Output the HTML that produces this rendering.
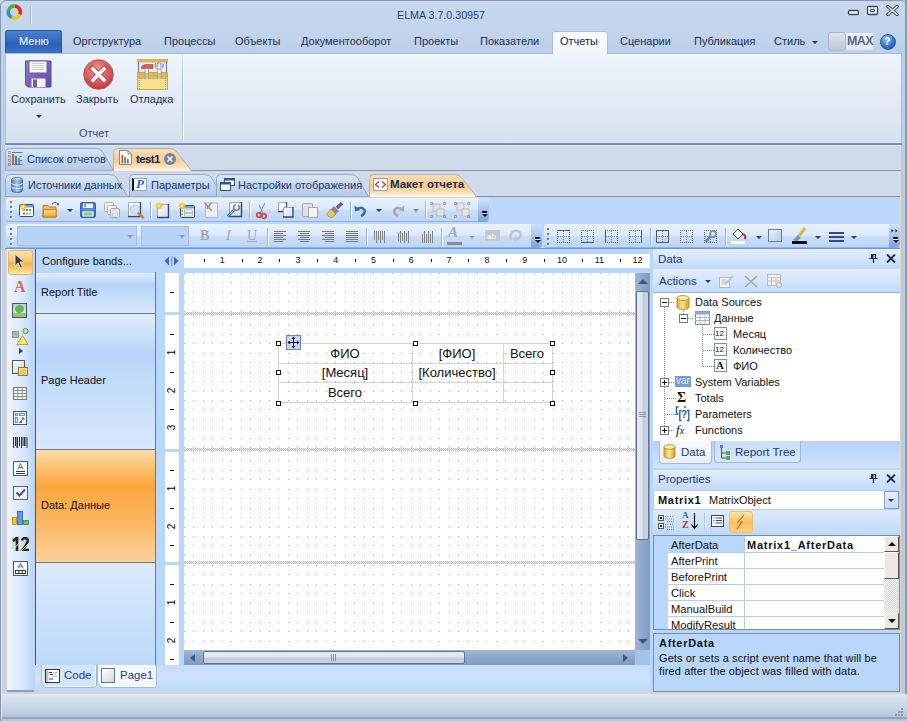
<!DOCTYPE html>
<html><head><meta charset="utf-8">
<style>
*{margin:0;padding:0;box-sizing:border-box}
html,body{width:907px;height:721px;overflow:hidden}
body{position:relative;background:#c3d4e9;font-family:"Liberation Sans",sans-serif;font-size:11px;color:#15428b}
.a{position:absolute}
.t{position:absolute;white-space:nowrap;line-height:13px}
svg{display:block}
</style></head><body>
<div class="a" style="left:0;top:0;width:907px;height:721px;background:linear-gradient(#c8d9ee,#c2d5ec 30px,#bcd0e8 53px,#c5d3e5 700px)"></div>
<div class="a" style="left:0;top:0;width:907px;height:721px;border:1px solid #8399b6;border-radius:6px 6px 0 0"></div>
<svg class="a" style="left:5px;top:3px" width="19" height="19" viewBox="0 0 19 19"><path d="M9.82 3.02 A6 6 0 0 1 14.74 11.54" stroke="#e8281c" stroke-width="3.6" fill="none"/><path d="M14.74 11.54 A6 6 0 0 1 6.76 14.44" stroke="#f6c400" stroke-width="3.6" fill="none"/><path d="M6.76 14.44 A6 6 0 0 1 3.66 6.95" stroke="#2f8ee0" stroke-width="3.6" fill="none"/><path d="M3.66 6.95 A6 6 0 0 1 9.82 3.02" stroke="#4cb038" stroke-width="3.6" fill="none"/></svg>
<div class="a" style="left:30px;top:7px;width:1px;height:17px;background:#9fb3cf;box-shadow:1px 0 0 #eaf1fa"></div>
<div class="t" style="left:397px;top:9px;font-size:10.7px;color:#2c3b78">ELMA 3.7.0.30957</div>
<svg class="a" style="left:847px;top:9px" width="13" height="7"><rect x="1.5" y="1.5" width="10" height="4" rx="1.2" fill="#f4f7fb" stroke="#3a4660" stroke-width="1.3"/></svg>
<svg class="a" style="left:866px;top:5px" width="13" height="11"><rect x="1.5" y="1.5" width="10" height="8" rx="1.2" fill="#f4f7fb" stroke="#3a4660" stroke-width="1.3"/><rect x="4.5" y="4.3" width="4" height="2.4" rx="0.6" fill="#c8d4e4" stroke="#3a4660" stroke-width="1"/></svg>
<svg class="a" style="left:886px;top:5px" width="13" height="11"><path d="M2 1.5L11 9.5M11 1.5L2 9.5" stroke="#3a4660" stroke-width="3.4" stroke-linecap="round"/><path d="M2 1.5L11 9.5M11 1.5L2 9.5" stroke="#f4f7fb" stroke-width="1.6" stroke-linecap="round"/></svg>
<div class="a" style="left:5px;top:30px;width:57px;height:24px;border-radius:3px 3px 0 0;background:linear-gradient(#4a7fd0,#3268c0 45%,#2d5fb8 55%,#3e76cc);border:1px solid #2b55a3;border-bottom:none"></div>
<div class="t" style="left:19px;top:35px;font-size:11px;color:#fff">Меню</div>
<div class="a" style="left:552px;top:31px;width:56px;height:24px;border-radius:3px 3px 0 0;background:linear-gradient(#ffffff,#f1f6fc);border:1px solid #a9bfd8;border-bottom:none"></div>
<div class="t" style="left:560px;top:35px;font-size:11px;color:#15283f">Отчеты</div>
<div class="t" style="left:73px;top:35px;font-size:11px;color:#1f2f55">Оргструктура</div>
<div class="t" style="left:164px;top:35px;font-size:11px;color:#1f2f55">Процессы</div>
<div class="t" style="left:235px;top:35px;font-size:11px;color:#1f2f55">Объекты</div>
<div class="t" style="left:301px;top:35px;font-size:11px;color:#1f2f55">Документооборот</div>
<div class="t" style="left:414px;top:35px;font-size:11px;color:#1f2f55">Проекты</div>
<div class="t" style="left:480px;top:35px;font-size:11px;color:#1f2f55">Показатели</div>
<div class="t" style="left:620px;top:35px;font-size:11px;color:#1f2f55">Сценарии</div>
<div class="t" style="left:694px;top:35px;font-size:11px;color:#1f2f55">Публикация</div>
<div class="t" style="left:774px;top:35px;font-size:11px;color:#1f2f55">Стиль</div>
<div class="a" style="left:812px;top:41px;width:0;height:0;border-left:3px solid transparent;border-right:3px solid transparent;border-top:3px solid #1c2d50"></div>
<div class="a" style="left:828px;top:32px;width:46px;height:19px;border:1px solid #c1cfe0;border-radius:3px;background:linear-gradient(#eef3fa,#e1e9f4)"></div>
<div class="a" style="left:828px;top:32px;width:18px;height:19px;border:1px solid #a9b6c6;border-radius:3px;background:linear-gradient(#dde5ee,#bcc8d6)"></div>
<div class="t" style="left:847px;top:35px;font-size:12.5px;font-weight:bold;color:#5a6884;letter-spacing:-0.6px">MAX</div>
<div class="a" style="left:880px;top:34px;width:16px;height:16px;border-radius:50%;background:radial-gradient(circle at 40% 30%,#8cc0f4,#2f6fcf 60%,#1d4ea8);border:1px solid #2a5aa8"></div>
<div class="t" style="left:884px;top:35px;font-size:11px;font-weight:bold;color:#fff">?</div>
<div class="a" style="left:5px;top:53px;width:897px;height:92px;background:linear-gradient(#edf4fc,#e2ebf6 50%,#d5e1ef);border:1px solid #a7bed9;border-bottom:none;border-radius:0 0 2px 2px"></div>
<div class="a" style="left:5px;top:143px;width:897px;height:2px;background:linear-gradient(#8199ba,#6a84a8)"></div>
<div class="a" style="left:553px;top:53px;width:54px;height:1px;background:#f1f6fc"></div>
<div class="a" style="left:182px;top:55px;width:1px;height:86px;background:linear-gradient(#d0dcec,#a9bdd8 25%,#a9bdd8 75%,#c8d6e8)"></div>
<div class="a" style="left:183px;top:55px;width:1px;height:86px;background:#f7fafe"></div>
<svg class="a" style="left:25px;top:60px" width="27" height="28" viewBox="0 0 27 28">
<defs><linearGradient id="pg" x1="0" y1="0" x2="1" y2="1"><stop offset="0" stop-color="#8e7ec8"/><stop offset="1" stop-color="#5e4aa4"/></linearGradient></defs>
<path d="M0.5 1 H26 V27 H3 L0.5 24.5 Z" fill="url(#pg)" stroke="#5a479e" stroke-width="1"/>
<rect x="4" y="1" width="18" height="12" fill="#fbfbfd" stroke="#6a58ac" stroke-width="1"/>
<path d="M6.5 3.5h13M6.5 5.5h13M6.5 7.5h13M6.5 9.5h13" stroke="#c4c4cc" stroke-width="0.9"/>
<rect x="6.5" y="18.5" width="14" height="8.5" fill="#f4f4f6"/>
<rect x="8" y="19.5" width="4" height="7.5" fill="#6d5bb0"/>
</svg>
<svg class="a" style="left:83px;top:59px" width="31" height="31" viewBox="0 0 31 31">
<defs><radialGradient id="rg" cx="0.45" cy="0.35" r="0.65"><stop offset="0" stop-color="#f49a9a"/><stop offset="0.7" stop-color="#d65454"/><stop offset="1" stop-color="#c03a3a"/></radialGradient></defs>
<circle cx="15.5" cy="15.5" r="14.8" fill="url(#rg)" stroke="#b84a4a" stroke-width="0.8"/>
<path d="M9.5 9.5 L21.5 21.5 M21.5 9.5 L9.5 21.5" stroke="#c64848" stroke-width="6" stroke-linecap="square"/>
<path d="M10 10 L21 21 M21 10 L10 21" stroke="#f2f7fd" stroke-width="3.8" stroke-linecap="square"/>
</svg>
<svg class="a" style="left:137px;top:59px" width="31" height="31" viewBox="0 0 31 31">
<rect x="0.5" y="0.5" width="30" height="2.5" fill="#e8b850" stroke="#c89a3a" stroke-width="0.6"/>
<path d="M1.5 3 V14 M29.5 3 V14" stroke="#6f7f95" stroke-width="1.2"/>
<rect x="0.5" y="13.5" width="30" height="17" fill="#f2d788" stroke="#d2a443" stroke-width="1"/>
<path d="M4 9 Q5 5.5 9 5.5 H16 V9.5 H4z" fill="#e05a50" stroke="#b83a30" stroke-width="0.6"/>
<rect x="8" y="9.5" width="3.5" height="11" fill="#eef1f5" stroke="#7d8ca0" stroke-width="0.7"/>
<path d="M18.5 4.5 A4.2 4.2 0 1 0 26 4.5 V7.5 H24 V4 H20.5 V7.5 H18.5z" fill="#eef1f5" stroke="#7d8ca0" stroke-width="0.8"/>
<rect x="20.3" y="10" width="3.8" height="10.5" fill="#eef1f5" stroke="#7d8ca0" stroke-width="0.7"/>
<rect x="1" y="14" width="29" height="6" fill="#c99a3a" opacity="0.55"/>
<rect x="1" y="20" width="29" height="10" fill="#f7df90"/>
<path d="M2.5 15 V30 M28.5 15 V30" stroke="#c89a3c" stroke-width="0.8" stroke-dasharray="1 1"/>
</svg>
<div class="t" style="left:11px;top:93px;font-size:11px;color:#1f2f55">Сохранить</div>
<div class="a" style="left:36px;top:115px;width:0;height:0;border-left:3px solid transparent;border-right:3px solid transparent;border-top:3px solid #1c2d50"></div>
<div class="t" style="left:76px;top:93px;font-size:11px;color:#1f2f55">Закрыть</div>
<div class="t" style="left:130px;top:93px;font-size:11px;color:#1f2f55">Отладка</div>
<div class="t" style="left:79px;top:127px;font-size:11px;color:#3b4d78">Отчет</div>
<div class="a" style="left:5px;top:145px;width:897px;height:53px;background:#cfdbeb"></div>
<div class="a" style="left:5px;top:145px;width:897px;height:1px;background:#dfe7f2"></div>
<div class="a" style="left:5px;top:170px;width:897px;height:1px;background:#7f98bd"></div>
<div class="a" style="left:5px;top:171px;width:897px;height:1px;background:#dcd6ca"></div>
<div class="a" style="left:5px;top:196px;width:897px;height:1px;background:#7490b8"></div>
<div class="a" style="left:5px;top:197px;width:897px;height:1px;background:#dcd6ca"></div>
<svg class="a" style="left:5px;top:148px" width="109" height="23" viewBox="0 0 109 23">
<defs><linearGradient id="g1" x1="0" y1="0" x2="0" y2="1"><stop offset="0" stop-color="#dbe8f8"/><stop offset="0.5" stop-color="#c3d7f2"/><stop offset="1" stop-color="#b2caea"/></linearGradient></defs>
<path d="M0.5 22.5 V4.5 Q0.5 0.5 4.5 0.5 H90 Q95 0.5 97 3 L108.5 22.5" fill="url(#g1)" stroke="#8ea7c9" stroke-width="1"/>
</svg>
<svg class="a" style="left:113px;top:148px" width="79" height="23" viewBox="0 0 79 23">
<defs><linearGradient id="g2" x1="0" y1="0" x2="0" y2="1"><stop offset="0" stop-color="#fbe1b6"/><stop offset="0.55" stop-color="#f9ca8c"/><stop offset="1" stop-color="#fdf1df"/></linearGradient></defs>
<path d="M0.5 22.5 V4.5 Q0.5 0.5 4.5 0.5 H56 Q61 0.5 63 3 L78.5 22.5" fill="url(#g2)" stroke="#a4b4c8" stroke-width="1"/>
</svg>
<div class="a" style="left:114px;top:169px;width:76px;height:2px;background:#fdf3e4"></div>
<svg class="a" style="left:8px;top:151px" width="16" height="16" viewBox="0 0 16 16">
<g fill="#f4f6fa" stroke="#8a96a6" stroke-width="0.8"><rect x="0.5" y="0.5" width="2" height="2"/><rect x="0.5" y="4.5" width="2" height="2"/><rect x="0.5" y="8.5" width="2" height="2"/><rect x="0.5" y="12.5" width="2" height="2"/></g>
<path d="M4 1.5H14.5M4 13.5H14.5M11.5 5.5H14M11.5 9.5H14" stroke="#6a7688" stroke-width="1"/>
<rect x="4" y="3" width="2" height="10" fill="#e05a40"/><rect x="7" y="5" width="2" height="8" fill="#3a9a3a"/><rect x="10" y="7" width="2" height="6" fill="#4a90e8"/>
</svg>
<div class="t" style="left:27px;top:153px;color:#22375e">Список отчетов</div>
<svg class="a" style="left:119px;top:150px" width="13" height="15" viewBox="0 0 13 15">
<path d="M0.5 0.5H9l3.5 3.5V14.5H0.5Z" fill="#fff" stroke="#7f8da0"/><path d="M9 0.5V4h3.5" fill="none" stroke="#7f8da0"/>
<rect x="2.5" y="5" width="1.8" height="8.5" fill="#d64a3a"/><rect x="5.2" y="7" width="1.8" height="6.5" fill="#3aa83a"/><rect x="7.9" y="9" width="1.8" height="4.5" fill="#3a7ad6"/>
</svg>
<div class="t" style="left:136px;top:153px;font-weight:bold;font-size:11.5px;color:#142a58;letter-spacing:-0.6px">test1</div>
<div class="a" style="left:164px;top:153px;width:12px;height:12px;border-radius:50%;background:#72849e"></div>
<svg class="a" style="left:164px;top:153px" width="12" height="12"><path d="M3.5 3.5L8.5 8.5M8.5 3.5L3.5 8.5" stroke="#fff" stroke-width="1.6"/></svg>
<svg class="a" style="left:5px;top:174px" width="123" height="23" viewBox="0 0 123 23">
<defs><linearGradient id="g3" x1="0" y1="0" x2="0" y2="1"><stop offset="0" stop-color="#dbe8f8"/><stop offset="0.5" stop-color="#c3d7f2"/><stop offset="1" stop-color="#b2caea"/></linearGradient></defs>
<path d="M0.5 22.5 V4.5 Q0.5 0.5 4.5 0.5 H104 Q109 0.5 111 3 L122.5 22.5" fill="url(#g3)" stroke="#8ea7c9" stroke-width="1"/>
</svg>
<svg class="a" style="left:129px;top:174px" width="94" height="23" viewBox="0 0 94 23">
<defs><linearGradient id="g4" x1="0" y1="0" x2="0" y2="1"><stop offset="0" stop-color="#dbe8f8"/><stop offset="0.5" stop-color="#c3d7f2"/><stop offset="1" stop-color="#b2caea"/></linearGradient></defs>
<path d="M0.5 22.5 V4.5 Q0.5 0.5 4.5 0.5 H75 Q80 0.5 82 3 L93.5 22.5" fill="url(#g4)" stroke="#8ea7c9" stroke-width="1"/>
</svg>
<svg class="a" style="left:216px;top:174px" width="153" height="23" viewBox="0 0 153 23">
<defs><linearGradient id="g5" x1="0" y1="0" x2="0" y2="1"><stop offset="0" stop-color="#dbe8f8"/><stop offset="0.5" stop-color="#c3d7f2"/><stop offset="1" stop-color="#b2caea"/></linearGradient></defs>
<path d="M0.5 22.5 V4.5 Q0.5 0.5 4.5 0.5 H134 Q139 0.5 141 3 L152.5 22.5" fill="url(#g5)" stroke="#8ea7c9" stroke-width="1"/>
</svg>
<svg class="a" style="left:369px;top:174px" width="108" height="23" viewBox="0 0 108 23">
<defs><linearGradient id="g6" x1="0" y1="0" x2="0" y2="1"><stop offset="0" stop-color="#fbe1b6"/><stop offset="0.55" stop-color="#f9ca8c"/><stop offset="1" stop-color="#fdf1df"/></linearGradient></defs>
<path d="M0.5 22.5 V4.5 Q0.5 0.5 4.5 0.5 H85 Q90 0.5 92 3 L107.5 22.5" fill="url(#g6)" stroke="#a4b4c8" stroke-width="1"/>
</svg>
<div class="a" style="left:370px;top:195px;width:105px;height:2px;background:#fdf3e4"></div>
<svg class="a" style="left:11px;top:177px" width="12" height="16" viewBox="0 0 12 16">
<defs><linearGradient id="db" x1="0" y1="0" x2="1" y2="0"><stop offset="0" stop-color="#4a78b8"/><stop offset="0.5" stop-color="#a9c8ee"/><stop offset="1" stop-color="#4a78b8"/></linearGradient></defs>
<ellipse cx="6" cy="2.5" rx="5.5" ry="2" fill="#cfe0f6" stroke="#3f6aa8" stroke-width="0.8"/>
<path d="M0.5 2.5V13.5A5.5 2 0 0 0 11.5 13.5V2.5" fill="url(#db)" stroke="#3f6aa8" stroke-width="0.8"/>
<path d="M0.5 6A5.5 2 0 0 0 11.5 6M0.5 9.7A5.5 2 0 0 0 11.5 9.7" fill="none" stroke="#f2f7fd" stroke-width="0.9"/>
</svg>
<div class="t" style="left:28px;top:179px;color:#22375e">Источники данных</div>
<div class="a" style="left:132px;top:178px;width:15px;height:13px;background:#fff;border:1px solid #93a3ba;border-left:2px solid #111"></div>
<div class="t" style="left:136px;top:177px;font-family:'Liberation Serif',serif;font-style:italic;font-weight:bold;font-size:13px;color:#2b63c4">P</div>
<div class="t" style="left:151px;top:179px;color:#22375e">Параметры</div>
<svg class="a" style="left:220px;top:178px" width="15" height="13" viewBox="0 0 15 13">
<rect x="4.5" y="0.5" width="10" height="7" fill="#fff" stroke="#2f4e7e"/><rect x="4.5" y="0.5" width="10" height="2" fill="#2f5a9a"/>
<rect x="0.5" y="4.5" width="10" height="8" fill="#fff" stroke="#2f4e7e"/><rect x="0.5" y="4.5" width="10" height="2" fill="#2f5a9a"/>
</svg>
<div class="t" style="left:238px;top:179px;color:#22375e">Настройки отображения</div>
<div class="a" style="left:373px;top:178px;width:15px;height:13px;background:#fff;border:1px solid #93a3ba"></div>
<svg class="a" style="left:373px;top:178px" width="15" height="13"><path d="M6 3.5L2.5 6.5 6 9.5M9 3.5L12.5 6.5 9 9.5" stroke="#c4343a" stroke-width="1.2" fill="none"/></svg>
<div class="t" style="left:390px;top:178px;font-weight:bold;font-size:11.5px;color:#1b2c55;letter-spacing:0px">Макет отчета</div>
<div class="a" style="left:5px;top:198px;width:897px;height:51px;background:#bcd7fa"></div>
<div class="a" style="left:5px;top:248px;width:897px;height:1px;background:#6f96cf"></div>
<div class="a" style="left:6px;top:198px;width:483px;height:24px;border-radius:3px;background:linear-gradient(#e9f2fd,#dce9fb 45%,#c7dcf8 55%,#bcd5f6);box-shadow:inset 0 -1px 0 #8fb2e3"></div><div class="a" style="left:478px;top:198px;width:11px;height:24px;border-radius:0 3px 5px 0;background:linear-gradient(#cfe2fb,#a9c8f0 45%,#7aa4dc);"></div><div class="a" style="left:482px;top:211px;width:5px;height:2px;background:#111;box-shadow:0 1px 0 #e8f2ff"></div><div class="a" style="left:481.5px;top:214px;width:0;height:0;border-left:3px solid transparent;border-right:3px solid transparent;border-top:3px solid #111"></div>
<div class="a" style="left:6px;top:224px;width:536px;height:24px;border-radius:3px;background:linear-gradient(#e9f2fd,#dce9fb 45%,#c7dcf8 55%,#bcd5f6);box-shadow:inset 0 -1px 0 #8fb2e3"></div><div class="a" style="left:531px;top:224px;width:11px;height:24px;border-radius:0 3px 5px 0;background:linear-gradient(#cfe2fb,#a9c8f0 45%,#7aa4dc);"></div><div class="a" style="left:535px;top:237px;width:5px;height:2px;background:#111;box-shadow:0 1px 0 #e8f2ff"></div><div class="a" style="left:534.5px;top:240px;width:0;height:0;border-left:3px solid transparent;border-right:3px solid transparent;border-top:3px solid #111"></div>
<div class="a" style="left:544px;top:224px;width:356px;height:24px;border-radius:3px;background:linear-gradient(#e9f2fd,#dce9fb 45%,#c7dcf8 55%,#bcd5f6);box-shadow:inset 0 -1px 0 #8fb2e3"></div><div class="a" style="left:889px;top:224px;width:11px;height:24px;border-radius:0 3px 5px 0;background:linear-gradient(#cfe2fb,#a9c8f0 45%,#7aa4dc);"></div><div class="a" style="left:893px;top:237px;width:5px;height:2px;background:#111;box-shadow:0 1px 0 #e8f2ff"></div><div class="a" style="left:892.5px;top:240px;width:0;height:0;border-left:3px solid transparent;border-right:3px solid transparent;border-top:3px solid #111"></div>
<svg class="a" style="left:891px;top:229px" width="8" height="4"><path d="M0.5 0V3.5L2.5 1.75zM4.5 0V3.5L6.5 1.75z" fill="#111"/></svg>
<div class="a" style="left:10px;top:201px;width:2px;height:2px;background:#4a7cc8;box-shadow:1px 1px 0 #fff"></div><div class="a" style="left:10px;top:206px;width:2px;height:2px;background:#4a7cc8;box-shadow:1px 1px 0 #fff"></div><div class="a" style="left:10px;top:211px;width:2px;height:2px;background:#4a7cc8;box-shadow:1px 1px 0 #fff"></div><div class="a" style="left:10px;top:216px;width:2px;height:2px;background:#4a7cc8;box-shadow:1px 1px 0 #fff"></div>
<div class="a" style="left:10px;top:228px;width:2px;height:2px;background:#4a7cc8;box-shadow:1px 1px 0 #fff"></div><div class="a" style="left:10px;top:233px;width:2px;height:2px;background:#4a7cc8;box-shadow:1px 1px 0 #fff"></div><div class="a" style="left:10px;top:238px;width:2px;height:2px;background:#4a7cc8;box-shadow:1px 1px 0 #fff"></div><div class="a" style="left:10px;top:243px;width:2px;height:2px;background:#4a7cc8;box-shadow:1px 1px 0 #fff"></div>
<div class="a" style="left:547px;top:228px;width:2px;height:2px;background:#4a7cc8;box-shadow:1px 1px 0 #fff"></div><div class="a" style="left:547px;top:233px;width:2px;height:2px;background:#4a7cc8;box-shadow:1px 1px 0 #fff"></div><div class="a" style="left:547px;top:238px;width:2px;height:2px;background:#4a7cc8;box-shadow:1px 1px 0 #fff"></div><div class="a" style="left:547px;top:243px;width:2px;height:2px;background:#4a7cc8;box-shadow:1px 1px 0 #fff"></div>
<svg class="a" style="left:19px;top:203px" width="15" height="14" viewBox="0 0 15 14">
<rect x="0.5" y="1.5" width="14" height="12" rx="1" fill="#fff" stroke="#2f4a78"/><rect x="1" y="2" width="13" height="2.5" fill="#7aa2dc"/>
<rect x="4" y="6" width="2" height="2" fill="#5ab050"/><rect x="7" y="6" width="2" height="2" fill="#3a8ee0"/><rect x="10" y="6" width="2" height="2" fill="#5ab050"/>
<rect x="4" y="9.5" width="2" height="2" fill="#3a8ee0"/><rect x="7" y="9.5" width="2" height="2" fill="#f08a50"/><rect x="10" y="9.5" width="2" height="2" fill="#f0c040"/>
<g stroke="#f2c80a" stroke-width="1.3"><path d="M0.5 4h7M4 0.5v7M1.5 1.5l5 5M6.5 1.5l-5 5"/></g><circle cx="4" cy="4" r="1.3" fill="#fff8d0"/>
</svg>
<svg class="a" style="left:42px;top:201px" width="18" height="17" viewBox="0 0 18 17">
<defs><linearGradient id="fo" x1="0" y1="0" x2="0" y2="1"><stop offset="0" stop-color="#fbe08a"/><stop offset="1" stop-color="#e8a820"/></linearGradient></defs>
<path d="M1 4.5h5l1.5 1.5h6.5v10h-13z" fill="#f0c060" stroke="#c8741a"/>
<path d="M1 16l0.8-7.5h12.5L14 16z" fill="url(#fo)" stroke="#c8741a" stroke-width="0.9"/>
<path d="M10 3Q13 0 16 3" fill="none" stroke="#4a6a9a" stroke-width="1.1"/><path d="M14.5 4.3L17 4.5 16.5 1.8z" fill="#4a6a9a"/>
</svg>
<div class="a" style="left:67px;top:209px;width:0;height:0;border-left:3px solid transparent;border-right:3px solid transparent;border-top:3px solid #1c3f84"></div>
<svg class="a" style="left:80px;top:202px" width="16" height="16" viewBox="0 0 16 16">
<rect x="0.8" y="0.8" width="14.4" height="14.4" rx="1.5" fill="#5a8ad6" stroke="#2f62b8" stroke-width="1.5"/>
<rect x="3" y="1.5" width="10" height="4.5" fill="#eef3fa"/><rect x="4.5" y="2" width="1.3" height="3" fill="#3a6ab8"/>
<rect x="2.5" y="9.5" width="11" height="5" fill="#fff"/><rect x="3.5" y="10.5" width="9" height="1.2" fill="#6cb84a"/><rect x="3.5" y="12.3" width="9" height="1.2" fill="#6cb84a"/>
</svg>
<svg class="a" style="left:104px;top:202px" width="16" height="16" viewBox="0 0 16 16">
<rect x="0.5" y="0.5" width="9" height="9" rx="1" fill="#f4f4f4" stroke="#b0b0b0"/><rect x="3.5" y="3.5" width="9" height="9" rx="1" fill="#f4f4f4" stroke="#b0b0b0"/>
<rect x="6.5" y="6.5" width="9" height="9" rx="1" fill="#e8e8e8" stroke="#a8a8a8"/><rect x="8.5" y="12" width="5" height="2" fill="#fff" stroke="#aaa" stroke-width="0.6"/>
</svg>
<svg class="a" style="left:128px;top:202px" width="17" height="17" viewBox="0 0 17 17">
<rect x="0" y="0" width="13" height="15" fill="#fff"/><path d="M0.5 15 V0.5 H13" stroke="#9aa8bc" fill="none"/><path d="M12.5 0 V14.5 H0" stroke="#2f4a78" stroke-width="1.4" fill="none"/>
<circle cx="7" cy="7.5" r="4.6" fill="#d6e6f6" stroke="#a8c4e4" stroke-width="1.2"/>
<path d="M10.5 11.5l4.5 4" stroke="#c88440" stroke-width="2.6" stroke-linecap="round"/>
</svg>
<div class="a" style="left:150px;top:201px;width:1px;height:18px;background:#9ab7df;box-shadow:1px 0 0 #fff"></div>
<svg class="a" style="left:155px;top:202px" width="15" height="17" viewBox="0 0 15 17">
<defs><linearGradient id="np" x1="0" y1="0" x2="1" y2="1"><stop offset="0" stop-color="#fff"/><stop offset="1" stop-color="#d4dae8"/></linearGradient></defs>
<rect x="2" y="2" width="12" height="14" fill="url(#np)"/><path d="M2.5 16 V2.5 H14" stroke="#9aa8bc" fill="none"/><path d="M13.5 2 V15.5 H2" stroke="#2f4a78" stroke-width="1.4" fill="none"/>
<g stroke="#f2c80a" stroke-width="1.3"><path d="M0.5 4h7M4 0.5v7M1.5 1.5l5 5M6.5 1.5l-5 5"/></g><circle cx="4" cy="4" r="1.3" fill="#fff8d0"/>
</svg>
<svg class="a" style="left:178px;top:202px" width="17" height="16" viewBox="0 0 17 16">
<rect x="2.5" y="3.5" width="14" height="12" rx="1" fill="#f8f8f6" stroke="#2f4a78"/><rect x="3" y="4" width="13" height="2.5" fill="#7aa2dc"/>
<rect x="3.5" y="8.5" width="1.5" height="1" fill="#3a68c0"/><rect x="6.5" y="8" width="8" height="2.5" fill="#fff" stroke="#9aa" stroke-width="0.7"/>
<rect x="3.5" y="12" width="1.5" height="1" fill="#3a68c0"/><rect x="6.5" y="11.5" width="8" height="2.5" fill="#fff" stroke="#9aa" stroke-width="0.7"/>
<g stroke="#f2c80a" stroke-width="1.3"><path d="M0.5 4h7M4 0.5v7M1.5 1.5l5 5M6.5 1.5l-5 5"/></g><circle cx="4" cy="4" r="1.3" fill="#fff8d0"/>
</svg>
<svg class="a" style="left:204px;top:202px" width="14" height="16" viewBox="0 0 14 16">
<rect x="1.5" y="1" width="12" height="14.5" fill="#eeeeee"/><path d="M1.5 15.5V1H13.5V15.5H1.5" stroke="#b8b8b8" fill="none"/>
<path d="M0.5 0.5L8 9M7.5 0.5L3 7" stroke="#9a9a9a" stroke-width="1.4"/>
</svg>
<svg class="a" style="left:227px;top:202px" width="16" height="16" viewBox="0 0 16 16">
<defs><linearGradient id="ps" x1="0" y1="0" x2="1" y2="1"><stop offset="0" stop-color="#fff"/><stop offset="1" stop-color="#ccd4e4"/></linearGradient></defs>
<rect x="2" y="0" width="13" height="15" fill="url(#ps)"/><path d="M2.5 15 V0.5 H15" stroke="#9aa8bc" fill="none"/><path d="M14.5 0 V14.5 H2" stroke="#2f4a78" stroke-width="1.4" fill="none"/>
<path d="M1.5 13.5L7 8" stroke="#4a7ed0" stroke-width="2.8" stroke-linecap="round"/><path d="M1.5 13.5L7 8" stroke="#a8c8f0" stroke-width="1"/>
<circle cx="9.5" cy="5.5" r="2.8" fill="none" stroke="#8a8a8a" stroke-width="1.6"/><rect x="9" y="2" width="2" height="2.5" fill="#fff"/>
</svg>
<div class="a" style="left:249px;top:201px;width:1px;height:18px;background:#9ab7df;box-shadow:1px 0 0 #fff"></div>
<svg class="a" style="left:256px;top:202px" width="12" height="17" viewBox="0 0 12 17">
<path d="M4 11L9 1M7 11L3 3" stroke="#8aa0be" stroke-width="1.2"/>
<circle cx="3" cy="13" r="2.3" fill="none" stroke="#d83a3a" stroke-width="1.6"/><circle cx="8" cy="14" r="2.3" fill="none" stroke="#d83a3a" stroke-width="1.6"/>
</svg>
<svg class="a" style="left:278px;top:202px" width="16" height="16" viewBox="0 0 16 16">
<rect x="0" y="0" width="9" height="10" fill="#fff"/><path d="M0.5 10V0.5H9" stroke="#9aa8bc" fill="none"/><path d="M8.5 0V9.5H0" stroke="#2f4a78" stroke-width="1.3" fill="none"/>
<defs><linearGradient id="cp" x1="0" y1="0" x2="1" y2="1"><stop offset="0" stop-color="#fff"/><stop offset="1" stop-color="#d0d8e6"/></linearGradient></defs>
<rect x="5" y="5" width="10.5" height="10.5" fill="url(#cp)"/><path d="M5.5 15.5V5.5H15" stroke="#9aa8bc" fill="none"/><path d="M15 5V15H5" stroke="#2f4a78" stroke-width="1.4" fill="none"/>
</svg>
<svg class="a" style="left:302px;top:202px" width="16" height="16" viewBox="0 0 16 16">
<rect x="0.5" y="1.5" width="10" height="13" rx="1" fill="#e2e2e2" stroke="#a8a8a8"/><rect x="6.5" y="5.5" width="9" height="10" fill="#f5f5f5" stroke="#a8a8a8"/>
</svg>
<svg class="a" style="left:326px;top:202px" width="17" height="16" viewBox="0 0 17 16">
<path d="M11 6L16 1" stroke="#6a52a8" stroke-width="3.2"/><path d="M8 4l5 5-3 3-5-5z" fill="#8a8a9a"/>
<path d="M5 7l5 5-4 3.5C4 15 1 14 0.5 12.5L2 11z" fill="#e8c860" stroke="#a88a30" stroke-width="0.8"/>
</svg>
<div class="a" style="left:350px;top:201px;width:1px;height:18px;background:#9ab7df;box-shadow:1px 0 0 #fff"></div>
<svg class="a" style="left:354px;top:204px" width="13" height="13" viewBox="0 0 13 13">
<path d="M3 5Q8 2 10.5 6Q11.5 10 7 12" fill="none" stroke="#2f6ad0" stroke-width="2.4"/>
<path d="M0.5 1.5L1 7.5 6.5 6z" fill="#2f6ad0"/>
</svg>
<div class="a" style="left:376px;top:209px;width:0;height:0;border-left:3px solid transparent;border-right:3px solid transparent;border-top:3px solid #1c3f84"></div>
<svg class="a" style="left:392px;top:204px" width="13" height="13" viewBox="0 0 13 13">
<path d="M10 5Q5 2 2.5 6Q1.5 10 6 12" fill="none" stroke="#a8a8a8" stroke-width="2.4"/>
<path d="M12.5 1.5L12 7.5 6.5 6z" fill="#a8a8a8"/>
</svg>
<div class="a" style="left:413px;top:209px;width:0;height:0;border-left:3px solid transparent;border-right:3px solid transparent;border-top:3px solid #8a8a8a"></div>
<div class="a" style="left:425px;top:201px;width:1px;height:18px;background:#9ab7df;box-shadow:1px 0 0 #fff"></div>
<svg class="a" style="left:430px;top:202px" width="17" height="16" viewBox="0 0 17 16">
<rect x="3" y="2" width="7" height="7" fill="#e6e6e6" stroke="#b0b0b0" stroke-width="0.8"/><rect x="7" y="7" width="7" height="7" fill="#e6e6e6" stroke="#b0b0b0" stroke-width="0.8"/>
<circle cx="1.5" cy="1.5" r="1.2" fill="none" stroke="#888"/><circle cx="14.5" cy="1.5" r="1.2" fill="none" stroke="#888"/><circle cx="1.5" cy="14.5" r="1.2" fill="none" stroke="#888"/><circle cx="14.5" cy="14.5" r="1.2" fill="none" stroke="#888"/>
</svg>
<svg class="a" style="left:454px;top:202px" width="17" height="16" viewBox="0 0 17 16">
<rect x="3" y="1" width="7" height="7" fill="#e6e6e6" stroke="#b0b0b0" stroke-width="0.8"/><rect x="8" y="7" width="7" height="7" fill="#e6e6e6" stroke="#b0b0b0" stroke-width="0.8"/>
<circle cx="1.5" cy="1.5" r="1.2" fill="none" stroke="#888"/><circle cx="14.5" cy="1.5" r="1.2" fill="none" stroke="#888"/><circle cx="1.5" cy="14.5" r="1.2" fill="none" stroke="#888"/><circle cx="14.5" cy="14.5" r="1.2" fill="none" stroke="#888"/>
</svg>
<div class="a" style="left:17px;top:226px;width:120px;height:20px;background:#b7d3f8;border:1px solid #a4bde0"></div>
<div class="a" style="left:127px;top:235px;width:0;height:0;border-left:3px solid transparent;border-right:3px solid transparent;border-top:3px solid #8a95a8"></div>
<div class="a" style="left:141px;top:226px;width:48px;height:20px;background:#b7d3f8;border:1px solid #a4bde0"></div>
<div class="a" style="left:179px;top:235px;width:0;height:0;border-left:3px solid transparent;border-right:3px solid transparent;border-top:3px solid #8a95a8"></div>
<div class="t" style="left:200px;top:229px;font-family:'Liberation Serif',serif;font-weight:bold;font-size:14px;color:#a4a8ae">B</div>
<div class="t" style="left:226px;top:229px;font-family:'Liberation Serif',serif;font-style:italic;font-size:14px;color:#a4a8ae">I</div>
<div class="t" style="left:247px;top:229px;font-family:'Liberation Serif',serif;font-size:14px;color:#a4a8ae;text-decoration:underline">U</div>
<div class="a" style="left:267px;top:228px;width:1px;height:18px;background:#9ab7df;box-shadow:1px 0 0 #fff"></div>
<div class="a" style="left:274px;top:231px;width:12px;height:1px;background:#777"></div><div class="a" style="left:274px;top:233px;width:9px;height:1px;background:#777"></div><div class="a" style="left:274px;top:235px;width:12px;height:1px;background:#777"></div><div class="a" style="left:274px;top:237px;width:9px;height:1px;background:#777"></div><div class="a" style="left:274px;top:239px;width:12px;height:1px;background:#777"></div><div class="a" style="left:274px;top:241px;width:9px;height:1px;background:#777"></div>
<div class="a" style="left:298px;top:231px;width:12px;height:1px;background:#777"></div><div class="a" style="left:300px;top:233px;width:9px;height:1px;background:#777"></div><div class="a" style="left:298px;top:235px;width:12px;height:1px;background:#777"></div><div class="a" style="left:300px;top:237px;width:9px;height:1px;background:#777"></div><div class="a" style="left:298px;top:239px;width:12px;height:1px;background:#777"></div><div class="a" style="left:300px;top:241px;width:9px;height:1px;background:#777"></div>
<div class="a" style="left:322px;top:231px;width:12px;height:1px;background:#777"></div><div class="a" style="left:325px;top:233px;width:9px;height:1px;background:#777"></div><div class="a" style="left:322px;top:235px;width:12px;height:1px;background:#777"></div><div class="a" style="left:325px;top:237px;width:9px;height:1px;background:#777"></div><div class="a" style="left:322px;top:239px;width:12px;height:1px;background:#777"></div><div class="a" style="left:325px;top:241px;width:9px;height:1px;background:#777"></div>
<div class="a" style="left:346px;top:231px;width:12px;height:1px;background:#777"></div><div class="a" style="left:346px;top:233px;width:12px;height:1px;background:#777"></div><div class="a" style="left:346px;top:235px;width:12px;height:1px;background:#777"></div><div class="a" style="left:346px;top:237px;width:12px;height:1px;background:#777"></div><div class="a" style="left:346px;top:239px;width:12px;height:1px;background:#777"></div><div class="a" style="left:346px;top:241px;width:12px;height:1px;background:#777"></div>
<div class="a" style="left:366px;top:228px;width:1px;height:18px;background:#9ab7df;box-shadow:1px 0 0 #fff"></div>
<div class="a" style="left:374px;top:231px;width:1px;height:9px;background:#858585"></div><div class="a" style="left:376px;top:231px;width:1px;height:12px;background:#858585"></div><div class="a" style="left:378px;top:231px;width:1px;height:9px;background:#858585"></div><div class="a" style="left:380px;top:231px;width:1px;height:12px;background:#858585"></div><div class="a" style="left:382px;top:231px;width:1px;height:9px;background:#858585"></div><div class="a" style="left:384px;top:231px;width:1px;height:12px;background:#858585"></div>
<div class="a" style="left:398px;top:233px;width:1px;height:8px;background:#858585"></div><div class="a" style="left:400px;top:231px;width:1px;height:12px;background:#858585"></div><div class="a" style="left:402px;top:233px;width:1px;height:8px;background:#858585"></div><div class="a" style="left:404px;top:231px;width:1px;height:12px;background:#858585"></div><div class="a" style="left:406px;top:233px;width:1px;height:8px;background:#858585"></div><div class="a" style="left:408px;top:231px;width:1px;height:12px;background:#858585"></div>
<div class="a" style="left:422px;top:234px;width:1px;height:9px;background:#858585"></div><div class="a" style="left:424px;top:231px;width:1px;height:12px;background:#858585"></div><div class="a" style="left:426px;top:234px;width:1px;height:9px;background:#858585"></div><div class="a" style="left:428px;top:231px;width:1px;height:12px;background:#858585"></div><div class="a" style="left:430px;top:234px;width:1px;height:9px;background:#858585"></div><div class="a" style="left:432px;top:231px;width:1px;height:12px;background:#858585"></div>
<div class="a" style="left:441px;top:228px;width:1px;height:18px;background:#9ab7df;box-shadow:1px 0 0 #fff"></div>
<div class="t" style="left:448px;top:226px;font-family:'Liberation Serif',serif;font-style:italic;font-weight:bold;font-size:15px;color:#a8acb2">A</div>
<div class="a" style="left:447px;top:242px;width:15px;height:3px;background:#8c8c8c"></div>
<div class="a" style="left:469px;top:236px;width:0;height:0;border-left:3px solid transparent;border-right:3px solid transparent;border-top:3px solid #9a9a9a"></div>
<div class="a" style="left:485px;top:230px;width:15px;height:11px;background:#c8c8c8;border-radius:1px"></div>
<div class="t" style="left:487px;top:230px;font-size:8px;color:#fff">ab</div>
<svg class="a" style="left:509px;top:229px" width="14" height="14" viewBox="0 0 14 14"><path d="M3 11Q0 7 3 3.5Q7 0 11 3.5Q13 7 9.5 9.5L6 9.5" fill="none" stroke="#c4c4c4" stroke-width="2.4"/><path d="M7 6L4 9.5 7 13z" fill="#c4c4c4"/></svg>
<div class="a" style="left:557px;top:230px;width:13px;height:13px;border:1px dotted #707070"></div><div class="a" style="left:563px;top:231px;width:0;height:11px;border-left:1px dotted #8a8a8a"></div><div class="a" style="left:558px;top:236px;width:11px;height:0;border-top:1px dotted #8a8a8a"></div><div class="a" style="left:557px;top:230px;width:13px;height:1px;background:#555d6a"></div>
<div class="a" style="left:581px;top:230px;width:13px;height:13px;border:1px dotted #707070"></div><div class="a" style="left:587px;top:231px;width:0;height:11px;border-left:1px dotted #8a8a8a"></div><div class="a" style="left:582px;top:236px;width:11px;height:0;border-top:1px dotted #8a8a8a"></div><div class="a" style="left:581px;top:242px;width:13px;height:1px;background:#555d6a"></div>
<div class="a" style="left:605px;top:230px;width:13px;height:13px;border:1px dotted #707070"></div><div class="a" style="left:611px;top:231px;width:0;height:11px;border-left:1px dotted #8a8a8a"></div><div class="a" style="left:606px;top:236px;width:11px;height:0;border-top:1px dotted #8a8a8a"></div><div class="a" style="left:605px;top:230px;width:1px;height:13px;background:#555d6a"></div>
<div class="a" style="left:629px;top:230px;width:13px;height:13px;border:1px dotted #707070"></div><div class="a" style="left:635px;top:231px;width:0;height:11px;border-left:1px dotted #8a8a8a"></div><div class="a" style="left:630px;top:236px;width:11px;height:0;border-top:1px dotted #8a8a8a"></div><div class="a" style="left:641px;top:230px;width:1px;height:13px;background:#555d6a"></div>
<div class="a" style="left:650px;top:228px;width:1px;height:18px;background:#9ab7df;box-shadow:1px 0 0 #fff"></div>
<div class="a" style="left:656px;top:230px;width:13px;height:13px;border:1px dotted #707070"></div><div class="a" style="left:662px;top:231px;width:0;height:11px;border-left:1px dotted #8a8a8a"></div><div class="a" style="left:657px;top:236px;width:11px;height:0;border-top:1px dotted #8a8a8a"></div><div class="a" style="left:656px;top:230px;width:13px;height:13px;border:1px solid #555d6a"></div>
<div class="a" style="left:680px;top:230px;width:13px;height:13px;border:1px dotted #707070"></div><div class="a" style="left:686px;top:231px;width:0;height:11px;border-left:1px dotted #8a8a8a"></div><div class="a" style="left:681px;top:236px;width:11px;height:0;border-top:1px dotted #8a8a8a"></div>
<div class="a" style="left:704px;top:230px;width:13px;height:13px;border:1px dotted #707070"></div><div class="a" style="left:710px;top:231px;width:0;height:11px;border-left:1px dotted #8a8a8a"></div><div class="a" style="left:705px;top:236px;width:11px;height:0;border-top:1px dotted #8a8a8a"></div><svg class="a" style="left:704px;top:229px" width="14" height="14"><path d="M1.5 12.5L7 7" stroke="#5a8ad8" stroke-width="2.6"/><circle cx="9" cy="5" r="3" fill="none" stroke="#8a94a4" stroke-width="1.8"/></svg>
<div class="a" style="left:725px;top:228px;width:1px;height:18px;background:#9ab7df;box-shadow:1px 0 0 #fff"></div>
<svg class="a" style="left:730px;top:227px" width="17" height="17" viewBox="0 0 17 17">
<path d="M3 7L8 2 13 7 8 12z" fill="#f4f6fa" stroke="#444" stroke-width="1"/><path d="M13 7Q16 8 15 12" stroke="#e03030" stroke-width="2.2" fill="none"/>
<rect x="1" y="14" width="14" height="3" fill="#fff"/>
</svg>
<div class="a" style="left:756px;top:236px;width:0;height:0;border-left:3px solid transparent;border-right:3px solid transparent;border-top:3px solid #1c3f84"></div>
<div class="a" style="left:768px;top:229px;width:14px;height:13px;border:1px solid #6a7a90;background:linear-gradient(135deg,#eef4fc,#b6cbe8)"></div>
<svg class="a" style="left:792px;top:227px" width="16" height="17" viewBox="0 0 16 17">
<path d="M13 1L7 9" stroke="#e0b840" stroke-width="3.2"/><path d="M6 8l3 3-4 3c-2 0-3-1-4-1z" fill="#7f90a8"/>
<rect x="0" y="14" width="15" height="3" fill="#111"/>
</svg>
<div class="a" style="left:815px;top:236px;width:0;height:0;border-left:3px solid transparent;border-right:3px solid transparent;border-top:3px solid #1c3f84"></div>
<div class="a" style="left:829px;top:232px;width:15px;height:2px;background:#2f4a80"></div>
<div class="a" style="left:829px;top:236px;width:15px;height:2px;background:#2f4a80"></div>
<div class="a" style="left:829px;top:240px;width:15px;height:2px;background:#2f4a80"></div>
<div class="a" style="left:851px;top:236px;width:0;height:0;border-left:3px solid transparent;border-right:3px solid transparent;border-top:3px solid #1c3f84"></div>
<div class="a" style="left:35px;top:249px;width:618px;height:443px;background:#b9d6fb"></div>
<div class="a" style="left:5px;top:249px;width:2px;height:443px;background:#d6d0c2"></div>
<div class="a" style="left:7px;top:249px;width:28px;height:442px;background:linear-gradient(90deg,#eef5fe,#d6e7fc 60%,#b9d4f6)"></div>
<div class="a" style="left:7px;top:690px;width:27px;height:2px;background:#7aa3d8"></div>
<div class="a" style="left:5px;top:692px;width:897px;height:2px;background:#ddd5c3"></div>
<div class="a" style="left:8px;top:250px;width:25px;height:25px;border:1px solid #d8b76c;border-radius:3px;background:linear-gradient(#fde4b0,#fbc26a 45%,#f9b24a 55%,#fde6a8)"></div>
<svg class="a" style="left:14px;top:253px" width="12" height="16" viewBox="0 0 12 16"><path d="M1 1V13L4 10 6.5 15 8.5 14 6 9H10z" fill="#3a3a3a" stroke="#fff" stroke-width="0.8"/></svg>
<div class="t" style="left:14px;top:279px;font-family:'Liberation Serif',serif;font-weight:bold;font-size:16px;color:#dc6464;line-height:16px">A</div>
<div class="a" style="left:12px;top:303px;width:15px;height:15px;border:1px solid #555;background:linear-gradient(#a8d4f0,#d0ecff)"></div>
<div class="a" style="left:15px;top:305px;width:9px;height:8px;border-radius:50%;background:#6ab84a"></div>
<div class="a" style="left:13px;top:313px;width:13px;height:4px;background:#8cc870"></div>
<svg class="a" style="left:11px;top:327px" width="19" height="19" viewBox="0 0 19 19">
<rect x="1.5" y="4.5" width="6" height="6" fill="#b4b4b4" stroke="#8a8a8a" stroke-width="0.8"/>
<circle cx="14.5" cy="4" r="2.6" fill="#b8e0a8" stroke="#58a048" stroke-width="1"/>
<path d="M11.5 8.5L17.2 17.5H5.8z" fill="#fbe07a" stroke="#d89a30" stroke-width="1"/>
</svg>
<div class="a" style="left:19px;top:348px;width:0;height:0;border-top:3px solid transparent;border-bottom:3px solid transparent;border-left:4px solid #1c3f84"></div>
<svg class="a" style="left:12px;top:360px" width="16" height="16" viewBox="0 0 16 16">
<defs><linearGradient id="sr" x1="0" y1="0" x2="1" y2="1"><stop offset="0" stop-color="#fff"/><stop offset="1" stop-color="#c8d0dc"/></linearGradient></defs>
<rect x="0.5" y="0.5" width="12" height="13" fill="url(#sr)" stroke="#555"/>
<rect x="6.5" y="7.5" width="9" height="8" fill="#fbe58a" stroke="#8a7a40"/><path d="M8 10h6M8 12h6M8 14h6" stroke="#c0a040" stroke-width="0.8"/>
</svg>
<svg class="a" style="left:13px;top:387px" width="14" height="13" viewBox="0 0 14 13">
<rect x="0.5" y="0.5" width="13" height="12" fill="#fff" stroke="#777"/>
<path d="M0.5 3.5h13M0.5 6.5h13M0.5 9.5h13M4.8 0.5v12M9.2 0.5v12" stroke="#8a8a8a"/>
</svg>
<svg class="a" style="left:13px;top:411px" width="14" height="14" viewBox="0 0 14 14">
<rect x="0.5" y="0.5" width="13" height="13" fill="#fff" stroke="#555"/>
<rect x="2.5" y="2.5" width="2" height="2" fill="#dfe8f5" stroke="#4a78c0" stroke-width="0.8"/><rect x="6.5" y="2.5" width="5" height="2" fill="#dfe8f5" stroke="#4a78c0" stroke-width="0.8"/>
<rect x="2.5" y="6.5" width="2" height="5" fill="#dfe8f5" stroke="#4a78c0" stroke-width="0.8"/><path d="M6.5 11.5L11 7M9 7h2v2M6.5 11.5h2v-2" stroke="#2a5ab0" stroke-width="1" fill="none"/>
</svg>
<svg class="a" style="left:13px;top:437px" width="15" height="11" viewBox="0 0 15 11"><rect x="0" y="0" width="1" height="9" fill="#333"/><rect x="2" y="0" width="1" height="9" fill="#333"/><rect x="3.5" y="0" width="1.5" height="9" fill="#333"/><rect x="6" y="0" width="1" height="9" fill="#333"/><rect x="8" y="0" width="1" height="9" fill="#333"/><rect x="9.5" y="0" width="1" height="9" fill="#333"/><rect x="11" y="0" width="1.5" height="9" fill="#333"/><rect x="13.5" y="0" width="1" height="9" fill="#333"/><rect x="0" y="9" width="1" height="2" fill="#333"/><rect x="3.5" y="9" width="1.5" height="2" fill="#333"/><rect x="8" y="9" width="1" height="2" fill="#333"/><rect x="13.5" y="9" width="1" height="2" fill="#333"/></svg>
<svg class="a" style="left:13px;top:461px" width="15" height="15" viewBox="0 0 15 15">
<rect x="0.5" y="0.5" width="14" height="14" fill="#fff" stroke="#555"/>
<path d="M4.8 8.5L7.5 2.5 10.2 8.5M5.8 6.5h3.4" stroke="#3a68c0" stroke-width="0.9" fill="none"/><path d="M3 10.5h9M3 12.5h9" stroke="#222" stroke-width="0.9"/>
</svg>
<svg class="a" style="left:13px;top:486px" width="15" height="14" viewBox="0 0 15 14">
<rect x="0.5" y="0.5" width="14" height="13" fill="#eef0f4" stroke="#666"/>
<path d="M3.5 6.5l3 3 5.5-6" stroke="#3a5a9a" stroke-width="2" fill="none"/>
</svg>
<svg class="a" style="left:12px;top:511px" width="17" height="14" viewBox="0 0 17 14">
<rect x="0.5" y="6.5" width="4" height="7" fill="#f4c020" stroke="#c08a10" stroke-width="0.8"/><rect x="5.5" y="0.5" width="5" height="13" fill="#5a9ae8" stroke="#2a5ab0" stroke-width="0.8"/><rect x="11.5" y="9.5" width="5" height="4" fill="#6ac060" stroke="#3a8a30" stroke-width="0.8"/>
</svg>
<svg class="a" style="left:12px;top:537px" width="17" height="14" viewBox="0 0 17 14">
<rect x="0" y="0" width="7.5" height="14" fill="#d8d8d8"/><rect x="9" y="0" width="8" height="14" fill="#d8d8d8"/>
<path d="M1 4L5 0.8V14" stroke="#222" stroke-width="2.6" fill="none"/><path d="M10 3.5Q10.5 1 13 1Q16 1.2 15.8 4Q15 7 10.5 13H17" stroke="#222" stroke-width="2.4" fill="none"/>
<path d="M0 14L7 6M9 14L17 6" stroke="#fff" stroke-width="0.8"/>
</svg>
<svg class="a" style="left:13px;top:561px" width="15" height="15" viewBox="0 0 15 15">
<rect x="0.5" y="0.5" width="14" height="14" fill="#fff" stroke="#555"/>
<path d="M4.8 7.5L7.5 2 10.2 7.5M5.8 5.7h3.4" stroke="#3a68c0" stroke-width="0.9" fill="none"/><rect x="2.5" y="9.5" width="10" height="3" fill="none" stroke="#333"/><path d="M5.8 9.5v3M9.2 9.5v3" stroke="#333"/>
</svg>
<div class="a" style="left:35px;top:249px;width:149px;height:416px;background:#b9d6fb"></div>
<div class="t" style="left:42px;top:255px;color:#111;font-size:11px">Configure bands...</div>
<svg class="a" style="left:164px;top:255px" width="16" height="12" viewBox="0 0 16 12">
<path d="M5 1.5V10.5L0.5 6z" fill="#3a6ac8"/><rect x="7" y="1" width="1.5" height="10" fill="#b0a080"/><path d="M10 1.5V10.5L14.5 6z" fill="#3a6ac8"/>
</svg>
<div class="a" style="left:35px;top:249px;width:1px;height:416px;background:#555"></div>
<div class="a" style="left:155px;top:272px;width:1px;height:393px;background:#777"></div>
<div class="a" style="left:36px;top:273px;width:119px;height:40px;background:linear-gradient(#e0edfd,#c8dffa 18%,#b7d5fa 30%,#c6defa 60%,#d9e8fb)"></div>
<div class="a" style="left:36px;top:313px;width:119px;height:1px;background:#777"></div>
<div class="t" style="left:41px;top:286px;color:#111">Report Title</div>
<div class="a" style="left:36px;top:314px;width:119px;height:135px;background:linear-gradient(#e0edfd,#c8dffa 18%,#b7d5fa 30%,#c6defa 60%,#d9e8fb)"></div>
<div class="a" style="left:36px;top:449px;width:119px;height:1px;background:#777"></div>
<div class="t" style="left:41px;top:374px;color:#111">Page Header</div>
<div class="a" style="left:36px;top:450px;width:119px;height:112px;background:linear-gradient(#fddcae,#fbb85c 22%,#fba63c 33%,#fbb55e 62%,#fdd19a)"></div>
<div class="a" style="left:36px;top:562px;width:119px;height:1px;background:#777"></div>
<div class="t" style="left:41px;top:499px;color:#111">Data: Данные</div>
<div class="a" style="left:36px;top:563px;width:119px;height:102px;background:linear-gradient(#dcebfc,#c9e0fb 60%,#bcd8fb)"></div>
<div class="a" style="left:36px;top:665px;width:119px;height:1px;background:#777"></div>
<div class="a" style="left:184px;top:254px;width:466px;height:14px;background:#fff"></div>
<div class="a" style="left:204px;top:259px;width:1px;height:3px;background:#111"></div>
<div class="t" style="left:219.8px;top:255px;font-size:9px;color:#111;line-height:11px">1</div>
<div class="a" style="left:242px;top:259px;width:1px;height:3px;background:#111"></div>
<div class="t" style="left:257.6px;top:255px;font-size:9px;color:#111;line-height:11px">2</div>
<div class="a" style="left:279px;top:259px;width:1px;height:3px;background:#111"></div>
<div class="t" style="left:295.4px;top:255px;font-size:9px;color:#111;line-height:11px">3</div>
<div class="a" style="left:317px;top:259px;width:1px;height:3px;background:#111"></div>
<div class="t" style="left:333.2px;top:255px;font-size:9px;color:#111;line-height:11px">4</div>
<div class="a" style="left:355px;top:259px;width:1px;height:3px;background:#111"></div>
<div class="t" style="left:371.0px;top:255px;font-size:9px;color:#111;line-height:11px">5</div>
<div class="a" style="left:393px;top:259px;width:1px;height:3px;background:#111"></div>
<div class="t" style="left:408.8px;top:255px;font-size:9px;color:#111;line-height:11px">6</div>
<div class="a" style="left:431px;top:259px;width:1px;height:3px;background:#111"></div>
<div class="t" style="left:446.6px;top:255px;font-size:9px;color:#111;line-height:11px">7</div>
<div class="a" style="left:468px;top:259px;width:1px;height:3px;background:#111"></div>
<div class="t" style="left:484.4px;top:255px;font-size:9px;color:#111;line-height:11px">8</div>
<div class="a" style="left:506px;top:259px;width:1px;height:3px;background:#111"></div>
<div class="t" style="left:522.2px;top:255px;font-size:9px;color:#111;line-height:11px">9</div>
<div class="a" style="left:544px;top:259px;width:1px;height:3px;background:#111"></div>
<div class="t" style="left:557.0px;top:255px;font-size:9px;color:#111;line-height:11px">10</div>
<div class="a" style="left:582px;top:259px;width:1px;height:3px;background:#111"></div>
<div class="t" style="left:594.7px;top:255px;font-size:9px;color:#111;line-height:11px">11</div>
<div class="a" style="left:620px;top:259px;width:1px;height:3px;background:#111"></div>
<div class="t" style="left:632.5px;top:255px;font-size:9px;color:#111;line-height:11px">12</div>
<div class="a" style="left:165px;top:273px;width:14px;height:39px;background:#fff"></div>
<div class="a" style="left:170px;top:292px;width:4px;height:1px;background:#111"></div>
<div class="a" style="left:165px;top:315px;width:14px;height:134px;background:#fff"></div>
<div class="a" style="left:170px;top:334px;width:4px;height:1px;background:#111"></div>
<div class="t" style="left:169px;top:347px;font-size:10px;color:#000;line-height:11px;transform:rotate(-90deg)">1</div>
<div class="a" style="left:170px;top:372px;width:4px;height:1px;background:#111"></div>
<div class="t" style="left:169px;top:385px;font-size:10px;color:#000;line-height:11px;transform:rotate(-90deg)">2</div>
<div class="a" style="left:170px;top:409px;width:4px;height:1px;background:#111"></div>
<div class="t" style="left:169px;top:422px;font-size:10px;color:#000;line-height:11px;transform:rotate(-90deg)">3</div>
<div class="a" style="left:165px;top:452px;width:14px;height:110px;background:#fff"></div>
<div class="a" style="left:170px;top:470px;width:4px;height:1px;background:#111"></div>
<div class="t" style="left:169px;top:483px;font-size:10px;color:#000;line-height:11px;transform:rotate(-90deg)">1</div>
<div class="a" style="left:170px;top:508px;width:4px;height:1px;background:#111"></div>
<div class="t" style="left:169px;top:521px;font-size:10px;color:#000;line-height:11px;transform:rotate(-90deg)">2</div>
<div class="a" style="left:170px;top:545px;width:4px;height:1px;background:#111"></div>
<div class="a" style="left:165px;top:565px;width:14px;height:100px;background:#fff"></div>
<div class="a" style="left:170px;top:584px;width:4px;height:1px;background:#111"></div>
<div class="t" style="left:169px;top:597px;font-size:10px;color:#000;line-height:11px;transform:rotate(-90deg)">1</div>
<div class="a" style="left:170px;top:622px;width:4px;height:1px;background:#111"></div>
<div class="t" style="left:169px;top:635px;font-size:10px;color:#000;line-height:11px;transform:rotate(-90deg)">2</div>
<div class="a" style="left:170px;top:659px;width:4px;height:1px;background:#111"></div>
<div class="a" style="left:184px;top:273px;width:451px;height:377px;background:#fff"></div>
<svg class="a" style="left:0;top:0" width="907" height="721"><path d="M184 273h1v1h-1zM193 273h1v1h-1zM203 273h1v1h-1zM212 273h1v1h-1zM222 273h1v1h-1zM231 273h1v1h-1zM241 273h1v1h-1zM250 273h1v1h-1zM260 273h1v1h-1zM269 273h1v1h-1zM278 273h1v1h-1zM288 273h1v1h-1zM297 273h1v1h-1zM307 273h1v1h-1zM316 273h1v1h-1zM326 273h1v1h-1zM335 273h1v1h-1zM345 273h1v1h-1zM354 273h1v1h-1zM364 273h1v1h-1zM373 273h1v1h-1zM382 273h1v1h-1zM392 273h1v1h-1zM401 273h1v1h-1zM411 273h1v1h-1zM420 273h1v1h-1zM430 273h1v1h-1zM439 273h1v1h-1zM449 273h1v1h-1zM458 273h1v1h-1zM467 273h1v1h-1zM477 273h1v1h-1zM486 273h1v1h-1zM496 273h1v1h-1zM505 273h1v1h-1zM515 273h1v1h-1zM524 273h1v1h-1zM534 273h1v1h-1zM543 273h1v1h-1zM553 273h1v1h-1zM562 273h1v1h-1zM571 273h1v1h-1zM581 273h1v1h-1zM590 273h1v1h-1zM600 273h1v1h-1zM609 273h1v1h-1zM619 273h1v1h-1zM628 273h1v1h-1zM184 282h1v1h-1zM193 282h1v1h-1zM203 282h1v1h-1zM212 282h1v1h-1zM222 282h1v1h-1zM231 282h1v1h-1zM241 282h1v1h-1zM250 282h1v1h-1zM260 282h1v1h-1zM269 282h1v1h-1zM278 282h1v1h-1zM288 282h1v1h-1zM297 282h1v1h-1zM307 282h1v1h-1zM316 282h1v1h-1zM326 282h1v1h-1zM335 282h1v1h-1zM345 282h1v1h-1zM354 282h1v1h-1zM364 282h1v1h-1zM373 282h1v1h-1zM382 282h1v1h-1zM392 282h1v1h-1zM401 282h1v1h-1zM411 282h1v1h-1zM420 282h1v1h-1zM430 282h1v1h-1zM439 282h1v1h-1zM449 282h1v1h-1zM458 282h1v1h-1zM467 282h1v1h-1zM477 282h1v1h-1zM486 282h1v1h-1zM496 282h1v1h-1zM505 282h1v1h-1zM515 282h1v1h-1zM524 282h1v1h-1zM534 282h1v1h-1zM543 282h1v1h-1zM553 282h1v1h-1zM562 282h1v1h-1zM571 282h1v1h-1zM581 282h1v1h-1zM590 282h1v1h-1zM600 282h1v1h-1zM609 282h1v1h-1zM619 282h1v1h-1zM628 282h1v1h-1zM184 292h1v1h-1zM193 292h1v1h-1zM203 292h1v1h-1zM212 292h1v1h-1zM222 292h1v1h-1zM231 292h1v1h-1zM241 292h1v1h-1zM250 292h1v1h-1zM260 292h1v1h-1zM269 292h1v1h-1zM278 292h1v1h-1zM288 292h1v1h-1zM297 292h1v1h-1zM307 292h1v1h-1zM316 292h1v1h-1zM326 292h1v1h-1zM335 292h1v1h-1zM345 292h1v1h-1zM354 292h1v1h-1zM364 292h1v1h-1zM373 292h1v1h-1zM382 292h1v1h-1zM392 292h1v1h-1zM401 292h1v1h-1zM411 292h1v1h-1zM420 292h1v1h-1zM430 292h1v1h-1zM439 292h1v1h-1zM449 292h1v1h-1zM458 292h1v1h-1zM467 292h1v1h-1zM477 292h1v1h-1zM486 292h1v1h-1zM496 292h1v1h-1zM505 292h1v1h-1zM515 292h1v1h-1zM524 292h1v1h-1zM534 292h1v1h-1zM543 292h1v1h-1zM553 292h1v1h-1zM562 292h1v1h-1zM571 292h1v1h-1zM581 292h1v1h-1zM590 292h1v1h-1zM600 292h1v1h-1zM609 292h1v1h-1zM619 292h1v1h-1zM628 292h1v1h-1zM184 301h1v1h-1zM193 301h1v1h-1zM203 301h1v1h-1zM212 301h1v1h-1zM222 301h1v1h-1zM231 301h1v1h-1zM241 301h1v1h-1zM250 301h1v1h-1zM260 301h1v1h-1zM269 301h1v1h-1zM278 301h1v1h-1zM288 301h1v1h-1zM297 301h1v1h-1zM307 301h1v1h-1zM316 301h1v1h-1zM326 301h1v1h-1zM335 301h1v1h-1zM345 301h1v1h-1zM354 301h1v1h-1zM364 301h1v1h-1zM373 301h1v1h-1zM382 301h1v1h-1zM392 301h1v1h-1zM401 301h1v1h-1zM411 301h1v1h-1zM420 301h1v1h-1zM430 301h1v1h-1zM439 301h1v1h-1zM449 301h1v1h-1zM458 301h1v1h-1zM467 301h1v1h-1zM477 301h1v1h-1zM486 301h1v1h-1zM496 301h1v1h-1zM505 301h1v1h-1zM515 301h1v1h-1zM524 301h1v1h-1zM534 301h1v1h-1zM543 301h1v1h-1zM553 301h1v1h-1zM562 301h1v1h-1zM571 301h1v1h-1zM581 301h1v1h-1zM590 301h1v1h-1zM600 301h1v1h-1zM609 301h1v1h-1zM619 301h1v1h-1zM628 301h1v1h-1zM184 311h1v1h-1zM193 311h1v1h-1zM203 311h1v1h-1zM212 311h1v1h-1zM222 311h1v1h-1zM231 311h1v1h-1zM241 311h1v1h-1zM250 311h1v1h-1zM260 311h1v1h-1zM269 311h1v1h-1zM278 311h1v1h-1zM288 311h1v1h-1zM297 311h1v1h-1zM307 311h1v1h-1zM316 311h1v1h-1zM326 311h1v1h-1zM335 311h1v1h-1zM345 311h1v1h-1zM354 311h1v1h-1zM364 311h1v1h-1zM373 311h1v1h-1zM382 311h1v1h-1zM392 311h1v1h-1zM401 311h1v1h-1zM411 311h1v1h-1zM420 311h1v1h-1zM430 311h1v1h-1zM439 311h1v1h-1zM449 311h1v1h-1zM458 311h1v1h-1zM467 311h1v1h-1zM477 311h1v1h-1zM486 311h1v1h-1zM496 311h1v1h-1zM505 311h1v1h-1zM515 311h1v1h-1zM524 311h1v1h-1zM534 311h1v1h-1zM543 311h1v1h-1zM553 311h1v1h-1zM562 311h1v1h-1zM571 311h1v1h-1zM581 311h1v1h-1zM590 311h1v1h-1zM600 311h1v1h-1zM609 311h1v1h-1zM619 311h1v1h-1zM628 311h1v1h-1zM184 315h1v1h-1zM193 315h1v1h-1zM203 315h1v1h-1zM212 315h1v1h-1zM222 315h1v1h-1zM231 315h1v1h-1zM241 315h1v1h-1zM250 315h1v1h-1zM260 315h1v1h-1zM269 315h1v1h-1zM278 315h1v1h-1zM288 315h1v1h-1zM297 315h1v1h-1zM307 315h1v1h-1zM316 315h1v1h-1zM326 315h1v1h-1zM335 315h1v1h-1zM345 315h1v1h-1zM354 315h1v1h-1zM364 315h1v1h-1zM373 315h1v1h-1zM382 315h1v1h-1zM392 315h1v1h-1zM401 315h1v1h-1zM411 315h1v1h-1zM420 315h1v1h-1zM430 315h1v1h-1zM439 315h1v1h-1zM449 315h1v1h-1zM458 315h1v1h-1zM467 315h1v1h-1zM477 315h1v1h-1zM486 315h1v1h-1zM496 315h1v1h-1zM505 315h1v1h-1zM515 315h1v1h-1zM524 315h1v1h-1zM534 315h1v1h-1zM543 315h1v1h-1zM553 315h1v1h-1zM562 315h1v1h-1zM571 315h1v1h-1zM581 315h1v1h-1zM590 315h1v1h-1zM600 315h1v1h-1zM609 315h1v1h-1zM619 315h1v1h-1zM628 315h1v1h-1zM184 324h1v1h-1zM193 324h1v1h-1zM203 324h1v1h-1zM212 324h1v1h-1zM222 324h1v1h-1zM231 324h1v1h-1zM241 324h1v1h-1zM250 324h1v1h-1zM260 324h1v1h-1zM269 324h1v1h-1zM278 324h1v1h-1zM288 324h1v1h-1zM297 324h1v1h-1zM307 324h1v1h-1zM316 324h1v1h-1zM326 324h1v1h-1zM335 324h1v1h-1zM345 324h1v1h-1zM354 324h1v1h-1zM364 324h1v1h-1zM373 324h1v1h-1zM382 324h1v1h-1zM392 324h1v1h-1zM401 324h1v1h-1zM411 324h1v1h-1zM420 324h1v1h-1zM430 324h1v1h-1zM439 324h1v1h-1zM449 324h1v1h-1zM458 324h1v1h-1zM467 324h1v1h-1zM477 324h1v1h-1zM486 324h1v1h-1zM496 324h1v1h-1zM505 324h1v1h-1zM515 324h1v1h-1zM524 324h1v1h-1zM534 324h1v1h-1zM543 324h1v1h-1zM553 324h1v1h-1zM562 324h1v1h-1zM571 324h1v1h-1zM581 324h1v1h-1zM590 324h1v1h-1zM600 324h1v1h-1zM609 324h1v1h-1zM619 324h1v1h-1zM628 324h1v1h-1zM184 334h1v1h-1zM193 334h1v1h-1zM203 334h1v1h-1zM212 334h1v1h-1zM222 334h1v1h-1zM231 334h1v1h-1zM241 334h1v1h-1zM250 334h1v1h-1zM260 334h1v1h-1zM269 334h1v1h-1zM278 334h1v1h-1zM288 334h1v1h-1zM297 334h1v1h-1zM307 334h1v1h-1zM316 334h1v1h-1zM326 334h1v1h-1zM335 334h1v1h-1zM345 334h1v1h-1zM354 334h1v1h-1zM364 334h1v1h-1zM373 334h1v1h-1zM382 334h1v1h-1zM392 334h1v1h-1zM401 334h1v1h-1zM411 334h1v1h-1zM420 334h1v1h-1zM430 334h1v1h-1zM439 334h1v1h-1zM449 334h1v1h-1zM458 334h1v1h-1zM467 334h1v1h-1zM477 334h1v1h-1zM486 334h1v1h-1zM496 334h1v1h-1zM505 334h1v1h-1zM515 334h1v1h-1zM524 334h1v1h-1zM534 334h1v1h-1zM543 334h1v1h-1zM553 334h1v1h-1zM562 334h1v1h-1zM571 334h1v1h-1zM581 334h1v1h-1zM590 334h1v1h-1zM600 334h1v1h-1zM609 334h1v1h-1zM619 334h1v1h-1zM628 334h1v1h-1zM184 343h1v1h-1zM193 343h1v1h-1zM203 343h1v1h-1zM212 343h1v1h-1zM222 343h1v1h-1zM231 343h1v1h-1zM241 343h1v1h-1zM250 343h1v1h-1zM260 343h1v1h-1zM269 343h1v1h-1zM278 343h1v1h-1zM288 343h1v1h-1zM297 343h1v1h-1zM307 343h1v1h-1zM316 343h1v1h-1zM326 343h1v1h-1zM335 343h1v1h-1zM345 343h1v1h-1zM354 343h1v1h-1zM364 343h1v1h-1zM373 343h1v1h-1zM382 343h1v1h-1zM392 343h1v1h-1zM401 343h1v1h-1zM411 343h1v1h-1zM420 343h1v1h-1zM430 343h1v1h-1zM439 343h1v1h-1zM449 343h1v1h-1zM458 343h1v1h-1zM467 343h1v1h-1zM477 343h1v1h-1zM486 343h1v1h-1zM496 343h1v1h-1zM505 343h1v1h-1zM515 343h1v1h-1zM524 343h1v1h-1zM534 343h1v1h-1zM543 343h1v1h-1zM553 343h1v1h-1zM562 343h1v1h-1zM571 343h1v1h-1zM581 343h1v1h-1zM590 343h1v1h-1zM600 343h1v1h-1zM609 343h1v1h-1zM619 343h1v1h-1zM628 343h1v1h-1zM184 353h1v1h-1zM193 353h1v1h-1zM203 353h1v1h-1zM212 353h1v1h-1zM222 353h1v1h-1zM231 353h1v1h-1zM241 353h1v1h-1zM250 353h1v1h-1zM260 353h1v1h-1zM269 353h1v1h-1zM278 353h1v1h-1zM288 353h1v1h-1zM297 353h1v1h-1zM307 353h1v1h-1zM316 353h1v1h-1zM326 353h1v1h-1zM335 353h1v1h-1zM345 353h1v1h-1zM354 353h1v1h-1zM364 353h1v1h-1zM373 353h1v1h-1zM382 353h1v1h-1zM392 353h1v1h-1zM401 353h1v1h-1zM411 353h1v1h-1zM420 353h1v1h-1zM430 353h1v1h-1zM439 353h1v1h-1zM449 353h1v1h-1zM458 353h1v1h-1zM467 353h1v1h-1zM477 353h1v1h-1zM486 353h1v1h-1zM496 353h1v1h-1zM505 353h1v1h-1zM515 353h1v1h-1zM524 353h1v1h-1zM534 353h1v1h-1zM543 353h1v1h-1zM553 353h1v1h-1zM562 353h1v1h-1zM571 353h1v1h-1zM581 353h1v1h-1zM590 353h1v1h-1zM600 353h1v1h-1zM609 353h1v1h-1zM619 353h1v1h-1zM628 353h1v1h-1zM184 362h1v1h-1zM193 362h1v1h-1zM203 362h1v1h-1zM212 362h1v1h-1zM222 362h1v1h-1zM231 362h1v1h-1zM241 362h1v1h-1zM250 362h1v1h-1zM260 362h1v1h-1zM269 362h1v1h-1zM278 362h1v1h-1zM288 362h1v1h-1zM297 362h1v1h-1zM307 362h1v1h-1zM316 362h1v1h-1zM326 362h1v1h-1zM335 362h1v1h-1zM345 362h1v1h-1zM354 362h1v1h-1zM364 362h1v1h-1zM373 362h1v1h-1zM382 362h1v1h-1zM392 362h1v1h-1zM401 362h1v1h-1zM411 362h1v1h-1zM420 362h1v1h-1zM430 362h1v1h-1zM439 362h1v1h-1zM449 362h1v1h-1zM458 362h1v1h-1zM467 362h1v1h-1zM477 362h1v1h-1zM486 362h1v1h-1zM496 362h1v1h-1zM505 362h1v1h-1zM515 362h1v1h-1zM524 362h1v1h-1zM534 362h1v1h-1zM543 362h1v1h-1zM553 362h1v1h-1zM562 362h1v1h-1zM571 362h1v1h-1zM581 362h1v1h-1zM590 362h1v1h-1zM600 362h1v1h-1zM609 362h1v1h-1zM619 362h1v1h-1zM628 362h1v1h-1zM184 372h1v1h-1zM193 372h1v1h-1zM203 372h1v1h-1zM212 372h1v1h-1zM222 372h1v1h-1zM231 372h1v1h-1zM241 372h1v1h-1zM250 372h1v1h-1zM260 372h1v1h-1zM269 372h1v1h-1zM278 372h1v1h-1zM288 372h1v1h-1zM297 372h1v1h-1zM307 372h1v1h-1zM316 372h1v1h-1zM326 372h1v1h-1zM335 372h1v1h-1zM345 372h1v1h-1zM354 372h1v1h-1zM364 372h1v1h-1zM373 372h1v1h-1zM382 372h1v1h-1zM392 372h1v1h-1zM401 372h1v1h-1zM411 372h1v1h-1zM420 372h1v1h-1zM430 372h1v1h-1zM439 372h1v1h-1zM449 372h1v1h-1zM458 372h1v1h-1zM467 372h1v1h-1zM477 372h1v1h-1zM486 372h1v1h-1zM496 372h1v1h-1zM505 372h1v1h-1zM515 372h1v1h-1zM524 372h1v1h-1zM534 372h1v1h-1zM543 372h1v1h-1zM553 372h1v1h-1zM562 372h1v1h-1zM571 372h1v1h-1zM581 372h1v1h-1zM590 372h1v1h-1zM600 372h1v1h-1zM609 372h1v1h-1zM619 372h1v1h-1zM628 372h1v1h-1zM184 381h1v1h-1zM193 381h1v1h-1zM203 381h1v1h-1zM212 381h1v1h-1zM222 381h1v1h-1zM231 381h1v1h-1zM241 381h1v1h-1zM250 381h1v1h-1zM260 381h1v1h-1zM269 381h1v1h-1zM278 381h1v1h-1zM288 381h1v1h-1zM297 381h1v1h-1zM307 381h1v1h-1zM316 381h1v1h-1zM326 381h1v1h-1zM335 381h1v1h-1zM345 381h1v1h-1zM354 381h1v1h-1zM364 381h1v1h-1zM373 381h1v1h-1zM382 381h1v1h-1zM392 381h1v1h-1zM401 381h1v1h-1zM411 381h1v1h-1zM420 381h1v1h-1zM430 381h1v1h-1zM439 381h1v1h-1zM449 381h1v1h-1zM458 381h1v1h-1zM467 381h1v1h-1zM477 381h1v1h-1zM486 381h1v1h-1zM496 381h1v1h-1zM505 381h1v1h-1zM515 381h1v1h-1zM524 381h1v1h-1zM534 381h1v1h-1zM543 381h1v1h-1zM553 381h1v1h-1zM562 381h1v1h-1zM571 381h1v1h-1zM581 381h1v1h-1zM590 381h1v1h-1zM600 381h1v1h-1zM609 381h1v1h-1zM619 381h1v1h-1zM628 381h1v1h-1zM184 391h1v1h-1zM193 391h1v1h-1zM203 391h1v1h-1zM212 391h1v1h-1zM222 391h1v1h-1zM231 391h1v1h-1zM241 391h1v1h-1zM250 391h1v1h-1zM260 391h1v1h-1zM269 391h1v1h-1zM278 391h1v1h-1zM288 391h1v1h-1zM297 391h1v1h-1zM307 391h1v1h-1zM316 391h1v1h-1zM326 391h1v1h-1zM335 391h1v1h-1zM345 391h1v1h-1zM354 391h1v1h-1zM364 391h1v1h-1zM373 391h1v1h-1zM382 391h1v1h-1zM392 391h1v1h-1zM401 391h1v1h-1zM411 391h1v1h-1zM420 391h1v1h-1zM430 391h1v1h-1zM439 391h1v1h-1zM449 391h1v1h-1zM458 391h1v1h-1zM467 391h1v1h-1zM477 391h1v1h-1zM486 391h1v1h-1zM496 391h1v1h-1zM505 391h1v1h-1zM515 391h1v1h-1zM524 391h1v1h-1zM534 391h1v1h-1zM543 391h1v1h-1zM553 391h1v1h-1zM562 391h1v1h-1zM571 391h1v1h-1zM581 391h1v1h-1zM590 391h1v1h-1zM600 391h1v1h-1zM609 391h1v1h-1zM619 391h1v1h-1zM628 391h1v1h-1zM184 400h1v1h-1zM193 400h1v1h-1zM203 400h1v1h-1zM212 400h1v1h-1zM222 400h1v1h-1zM231 400h1v1h-1zM241 400h1v1h-1zM250 400h1v1h-1zM260 400h1v1h-1zM269 400h1v1h-1zM278 400h1v1h-1zM288 400h1v1h-1zM297 400h1v1h-1zM307 400h1v1h-1zM316 400h1v1h-1zM326 400h1v1h-1zM335 400h1v1h-1zM345 400h1v1h-1zM354 400h1v1h-1zM364 400h1v1h-1zM373 400h1v1h-1zM382 400h1v1h-1zM392 400h1v1h-1zM401 400h1v1h-1zM411 400h1v1h-1zM420 400h1v1h-1zM430 400h1v1h-1zM439 400h1v1h-1zM449 400h1v1h-1zM458 400h1v1h-1zM467 400h1v1h-1zM477 400h1v1h-1zM486 400h1v1h-1zM496 400h1v1h-1zM505 400h1v1h-1zM515 400h1v1h-1zM524 400h1v1h-1zM534 400h1v1h-1zM543 400h1v1h-1zM553 400h1v1h-1zM562 400h1v1h-1zM571 400h1v1h-1zM581 400h1v1h-1zM590 400h1v1h-1zM600 400h1v1h-1zM609 400h1v1h-1zM619 400h1v1h-1zM628 400h1v1h-1zM184 409h1v1h-1zM193 409h1v1h-1zM203 409h1v1h-1zM212 409h1v1h-1zM222 409h1v1h-1zM231 409h1v1h-1zM241 409h1v1h-1zM250 409h1v1h-1zM260 409h1v1h-1zM269 409h1v1h-1zM278 409h1v1h-1zM288 409h1v1h-1zM297 409h1v1h-1zM307 409h1v1h-1zM316 409h1v1h-1zM326 409h1v1h-1zM335 409h1v1h-1zM345 409h1v1h-1zM354 409h1v1h-1zM364 409h1v1h-1zM373 409h1v1h-1zM382 409h1v1h-1zM392 409h1v1h-1zM401 409h1v1h-1zM411 409h1v1h-1zM420 409h1v1h-1zM430 409h1v1h-1zM439 409h1v1h-1zM449 409h1v1h-1zM458 409h1v1h-1zM467 409h1v1h-1zM477 409h1v1h-1zM486 409h1v1h-1zM496 409h1v1h-1zM505 409h1v1h-1zM515 409h1v1h-1zM524 409h1v1h-1zM534 409h1v1h-1zM543 409h1v1h-1zM553 409h1v1h-1zM562 409h1v1h-1zM571 409h1v1h-1zM581 409h1v1h-1zM590 409h1v1h-1zM600 409h1v1h-1zM609 409h1v1h-1zM619 409h1v1h-1zM628 409h1v1h-1zM184 419h1v1h-1zM193 419h1v1h-1zM203 419h1v1h-1zM212 419h1v1h-1zM222 419h1v1h-1zM231 419h1v1h-1zM241 419h1v1h-1zM250 419h1v1h-1zM260 419h1v1h-1zM269 419h1v1h-1zM278 419h1v1h-1zM288 419h1v1h-1zM297 419h1v1h-1zM307 419h1v1h-1zM316 419h1v1h-1zM326 419h1v1h-1zM335 419h1v1h-1zM345 419h1v1h-1zM354 419h1v1h-1zM364 419h1v1h-1zM373 419h1v1h-1zM382 419h1v1h-1zM392 419h1v1h-1zM401 419h1v1h-1zM411 419h1v1h-1zM420 419h1v1h-1zM430 419h1v1h-1zM439 419h1v1h-1zM449 419h1v1h-1zM458 419h1v1h-1zM467 419h1v1h-1zM477 419h1v1h-1zM486 419h1v1h-1zM496 419h1v1h-1zM505 419h1v1h-1zM515 419h1v1h-1zM524 419h1v1h-1zM534 419h1v1h-1zM543 419h1v1h-1zM553 419h1v1h-1zM562 419h1v1h-1zM571 419h1v1h-1zM581 419h1v1h-1zM590 419h1v1h-1zM600 419h1v1h-1zM609 419h1v1h-1zM619 419h1v1h-1zM628 419h1v1h-1zM184 428h1v1h-1zM193 428h1v1h-1zM203 428h1v1h-1zM212 428h1v1h-1zM222 428h1v1h-1zM231 428h1v1h-1zM241 428h1v1h-1zM250 428h1v1h-1zM260 428h1v1h-1zM269 428h1v1h-1zM278 428h1v1h-1zM288 428h1v1h-1zM297 428h1v1h-1zM307 428h1v1h-1zM316 428h1v1h-1zM326 428h1v1h-1zM335 428h1v1h-1zM345 428h1v1h-1zM354 428h1v1h-1zM364 428h1v1h-1zM373 428h1v1h-1zM382 428h1v1h-1zM392 428h1v1h-1zM401 428h1v1h-1zM411 428h1v1h-1zM420 428h1v1h-1zM430 428h1v1h-1zM439 428h1v1h-1zM449 428h1v1h-1zM458 428h1v1h-1zM467 428h1v1h-1zM477 428h1v1h-1zM486 428h1v1h-1zM496 428h1v1h-1zM505 428h1v1h-1zM515 428h1v1h-1zM524 428h1v1h-1zM534 428h1v1h-1zM543 428h1v1h-1zM553 428h1v1h-1zM562 428h1v1h-1zM571 428h1v1h-1zM581 428h1v1h-1zM590 428h1v1h-1zM600 428h1v1h-1zM609 428h1v1h-1zM619 428h1v1h-1zM628 428h1v1h-1zM184 438h1v1h-1zM193 438h1v1h-1zM203 438h1v1h-1zM212 438h1v1h-1zM222 438h1v1h-1zM231 438h1v1h-1zM241 438h1v1h-1zM250 438h1v1h-1zM260 438h1v1h-1zM269 438h1v1h-1zM278 438h1v1h-1zM288 438h1v1h-1zM297 438h1v1h-1zM307 438h1v1h-1zM316 438h1v1h-1zM326 438h1v1h-1zM335 438h1v1h-1zM345 438h1v1h-1zM354 438h1v1h-1zM364 438h1v1h-1zM373 438h1v1h-1zM382 438h1v1h-1zM392 438h1v1h-1zM401 438h1v1h-1zM411 438h1v1h-1zM420 438h1v1h-1zM430 438h1v1h-1zM439 438h1v1h-1zM449 438h1v1h-1zM458 438h1v1h-1zM467 438h1v1h-1zM477 438h1v1h-1zM486 438h1v1h-1zM496 438h1v1h-1zM505 438h1v1h-1zM515 438h1v1h-1zM524 438h1v1h-1zM534 438h1v1h-1zM543 438h1v1h-1zM553 438h1v1h-1zM562 438h1v1h-1zM571 438h1v1h-1zM581 438h1v1h-1zM590 438h1v1h-1zM600 438h1v1h-1zM609 438h1v1h-1zM619 438h1v1h-1zM628 438h1v1h-1zM184 447h1v1h-1zM193 447h1v1h-1zM203 447h1v1h-1zM212 447h1v1h-1zM222 447h1v1h-1zM231 447h1v1h-1zM241 447h1v1h-1zM250 447h1v1h-1zM260 447h1v1h-1zM269 447h1v1h-1zM278 447h1v1h-1zM288 447h1v1h-1zM297 447h1v1h-1zM307 447h1v1h-1zM316 447h1v1h-1zM326 447h1v1h-1zM335 447h1v1h-1zM345 447h1v1h-1zM354 447h1v1h-1zM364 447h1v1h-1zM373 447h1v1h-1zM382 447h1v1h-1zM392 447h1v1h-1zM401 447h1v1h-1zM411 447h1v1h-1zM420 447h1v1h-1zM430 447h1v1h-1zM439 447h1v1h-1zM449 447h1v1h-1zM458 447h1v1h-1zM467 447h1v1h-1zM477 447h1v1h-1zM486 447h1v1h-1zM496 447h1v1h-1zM505 447h1v1h-1zM515 447h1v1h-1zM524 447h1v1h-1zM534 447h1v1h-1zM543 447h1v1h-1zM553 447h1v1h-1zM562 447h1v1h-1zM571 447h1v1h-1zM581 447h1v1h-1zM590 447h1v1h-1zM600 447h1v1h-1zM609 447h1v1h-1zM619 447h1v1h-1zM628 447h1v1h-1zM184 451h1v1h-1zM193 451h1v1h-1zM203 451h1v1h-1zM212 451h1v1h-1zM222 451h1v1h-1zM231 451h1v1h-1zM241 451h1v1h-1zM250 451h1v1h-1zM260 451h1v1h-1zM269 451h1v1h-1zM278 451h1v1h-1zM288 451h1v1h-1zM297 451h1v1h-1zM307 451h1v1h-1zM316 451h1v1h-1zM326 451h1v1h-1zM335 451h1v1h-1zM345 451h1v1h-1zM354 451h1v1h-1zM364 451h1v1h-1zM373 451h1v1h-1zM382 451h1v1h-1zM392 451h1v1h-1zM401 451h1v1h-1zM411 451h1v1h-1zM420 451h1v1h-1zM430 451h1v1h-1zM439 451h1v1h-1zM449 451h1v1h-1zM458 451h1v1h-1zM467 451h1v1h-1zM477 451h1v1h-1zM486 451h1v1h-1zM496 451h1v1h-1zM505 451h1v1h-1zM515 451h1v1h-1zM524 451h1v1h-1zM534 451h1v1h-1zM543 451h1v1h-1zM553 451h1v1h-1zM562 451h1v1h-1zM571 451h1v1h-1zM581 451h1v1h-1zM590 451h1v1h-1zM600 451h1v1h-1zM609 451h1v1h-1zM619 451h1v1h-1zM628 451h1v1h-1zM184 460h1v1h-1zM193 460h1v1h-1zM203 460h1v1h-1zM212 460h1v1h-1zM222 460h1v1h-1zM231 460h1v1h-1zM241 460h1v1h-1zM250 460h1v1h-1zM260 460h1v1h-1zM269 460h1v1h-1zM278 460h1v1h-1zM288 460h1v1h-1zM297 460h1v1h-1zM307 460h1v1h-1zM316 460h1v1h-1zM326 460h1v1h-1zM335 460h1v1h-1zM345 460h1v1h-1zM354 460h1v1h-1zM364 460h1v1h-1zM373 460h1v1h-1zM382 460h1v1h-1zM392 460h1v1h-1zM401 460h1v1h-1zM411 460h1v1h-1zM420 460h1v1h-1zM430 460h1v1h-1zM439 460h1v1h-1zM449 460h1v1h-1zM458 460h1v1h-1zM467 460h1v1h-1zM477 460h1v1h-1zM486 460h1v1h-1zM496 460h1v1h-1zM505 460h1v1h-1zM515 460h1v1h-1zM524 460h1v1h-1zM534 460h1v1h-1zM543 460h1v1h-1zM553 460h1v1h-1zM562 460h1v1h-1zM571 460h1v1h-1zM581 460h1v1h-1zM590 460h1v1h-1zM600 460h1v1h-1zM609 460h1v1h-1zM619 460h1v1h-1zM628 460h1v1h-1zM184 470h1v1h-1zM193 470h1v1h-1zM203 470h1v1h-1zM212 470h1v1h-1zM222 470h1v1h-1zM231 470h1v1h-1zM241 470h1v1h-1zM250 470h1v1h-1zM260 470h1v1h-1zM269 470h1v1h-1zM278 470h1v1h-1zM288 470h1v1h-1zM297 470h1v1h-1zM307 470h1v1h-1zM316 470h1v1h-1zM326 470h1v1h-1zM335 470h1v1h-1zM345 470h1v1h-1zM354 470h1v1h-1zM364 470h1v1h-1zM373 470h1v1h-1zM382 470h1v1h-1zM392 470h1v1h-1zM401 470h1v1h-1zM411 470h1v1h-1zM420 470h1v1h-1zM430 470h1v1h-1zM439 470h1v1h-1zM449 470h1v1h-1zM458 470h1v1h-1zM467 470h1v1h-1zM477 470h1v1h-1zM486 470h1v1h-1zM496 470h1v1h-1zM505 470h1v1h-1zM515 470h1v1h-1zM524 470h1v1h-1zM534 470h1v1h-1zM543 470h1v1h-1zM553 470h1v1h-1zM562 470h1v1h-1zM571 470h1v1h-1zM581 470h1v1h-1zM590 470h1v1h-1zM600 470h1v1h-1zM609 470h1v1h-1zM619 470h1v1h-1zM628 470h1v1h-1zM184 479h1v1h-1zM193 479h1v1h-1zM203 479h1v1h-1zM212 479h1v1h-1zM222 479h1v1h-1zM231 479h1v1h-1zM241 479h1v1h-1zM250 479h1v1h-1zM260 479h1v1h-1zM269 479h1v1h-1zM278 479h1v1h-1zM288 479h1v1h-1zM297 479h1v1h-1zM307 479h1v1h-1zM316 479h1v1h-1zM326 479h1v1h-1zM335 479h1v1h-1zM345 479h1v1h-1zM354 479h1v1h-1zM364 479h1v1h-1zM373 479h1v1h-1zM382 479h1v1h-1zM392 479h1v1h-1zM401 479h1v1h-1zM411 479h1v1h-1zM420 479h1v1h-1zM430 479h1v1h-1zM439 479h1v1h-1zM449 479h1v1h-1zM458 479h1v1h-1zM467 479h1v1h-1zM477 479h1v1h-1zM486 479h1v1h-1zM496 479h1v1h-1zM505 479h1v1h-1zM515 479h1v1h-1zM524 479h1v1h-1zM534 479h1v1h-1zM543 479h1v1h-1zM553 479h1v1h-1zM562 479h1v1h-1zM571 479h1v1h-1zM581 479h1v1h-1zM590 479h1v1h-1zM600 479h1v1h-1zM609 479h1v1h-1zM619 479h1v1h-1zM628 479h1v1h-1zM184 489h1v1h-1zM193 489h1v1h-1zM203 489h1v1h-1zM212 489h1v1h-1zM222 489h1v1h-1zM231 489h1v1h-1zM241 489h1v1h-1zM250 489h1v1h-1zM260 489h1v1h-1zM269 489h1v1h-1zM278 489h1v1h-1zM288 489h1v1h-1zM297 489h1v1h-1zM307 489h1v1h-1zM316 489h1v1h-1zM326 489h1v1h-1zM335 489h1v1h-1zM345 489h1v1h-1zM354 489h1v1h-1zM364 489h1v1h-1zM373 489h1v1h-1zM382 489h1v1h-1zM392 489h1v1h-1zM401 489h1v1h-1zM411 489h1v1h-1zM420 489h1v1h-1zM430 489h1v1h-1zM439 489h1v1h-1zM449 489h1v1h-1zM458 489h1v1h-1zM467 489h1v1h-1zM477 489h1v1h-1zM486 489h1v1h-1zM496 489h1v1h-1zM505 489h1v1h-1zM515 489h1v1h-1zM524 489h1v1h-1zM534 489h1v1h-1zM543 489h1v1h-1zM553 489h1v1h-1zM562 489h1v1h-1zM571 489h1v1h-1zM581 489h1v1h-1zM590 489h1v1h-1zM600 489h1v1h-1zM609 489h1v1h-1zM619 489h1v1h-1zM628 489h1v1h-1zM184 498h1v1h-1zM193 498h1v1h-1zM203 498h1v1h-1zM212 498h1v1h-1zM222 498h1v1h-1zM231 498h1v1h-1zM241 498h1v1h-1zM250 498h1v1h-1zM260 498h1v1h-1zM269 498h1v1h-1zM278 498h1v1h-1zM288 498h1v1h-1zM297 498h1v1h-1zM307 498h1v1h-1zM316 498h1v1h-1zM326 498h1v1h-1zM335 498h1v1h-1zM345 498h1v1h-1zM354 498h1v1h-1zM364 498h1v1h-1zM373 498h1v1h-1zM382 498h1v1h-1zM392 498h1v1h-1zM401 498h1v1h-1zM411 498h1v1h-1zM420 498h1v1h-1zM430 498h1v1h-1zM439 498h1v1h-1zM449 498h1v1h-1zM458 498h1v1h-1zM467 498h1v1h-1zM477 498h1v1h-1zM486 498h1v1h-1zM496 498h1v1h-1zM505 498h1v1h-1zM515 498h1v1h-1zM524 498h1v1h-1zM534 498h1v1h-1zM543 498h1v1h-1zM553 498h1v1h-1zM562 498h1v1h-1zM571 498h1v1h-1zM581 498h1v1h-1zM590 498h1v1h-1zM600 498h1v1h-1zM609 498h1v1h-1zM619 498h1v1h-1zM628 498h1v1h-1zM184 508h1v1h-1zM193 508h1v1h-1zM203 508h1v1h-1zM212 508h1v1h-1zM222 508h1v1h-1zM231 508h1v1h-1zM241 508h1v1h-1zM250 508h1v1h-1zM260 508h1v1h-1zM269 508h1v1h-1zM278 508h1v1h-1zM288 508h1v1h-1zM297 508h1v1h-1zM307 508h1v1h-1zM316 508h1v1h-1zM326 508h1v1h-1zM335 508h1v1h-1zM345 508h1v1h-1zM354 508h1v1h-1zM364 508h1v1h-1zM373 508h1v1h-1zM382 508h1v1h-1zM392 508h1v1h-1zM401 508h1v1h-1zM411 508h1v1h-1zM420 508h1v1h-1zM430 508h1v1h-1zM439 508h1v1h-1zM449 508h1v1h-1zM458 508h1v1h-1zM467 508h1v1h-1zM477 508h1v1h-1zM486 508h1v1h-1zM496 508h1v1h-1zM505 508h1v1h-1zM515 508h1v1h-1zM524 508h1v1h-1zM534 508h1v1h-1zM543 508h1v1h-1zM553 508h1v1h-1zM562 508h1v1h-1zM571 508h1v1h-1zM581 508h1v1h-1zM590 508h1v1h-1zM600 508h1v1h-1zM609 508h1v1h-1zM619 508h1v1h-1zM628 508h1v1h-1zM184 517h1v1h-1zM193 517h1v1h-1zM203 517h1v1h-1zM212 517h1v1h-1zM222 517h1v1h-1zM231 517h1v1h-1zM241 517h1v1h-1zM250 517h1v1h-1zM260 517h1v1h-1zM269 517h1v1h-1zM278 517h1v1h-1zM288 517h1v1h-1zM297 517h1v1h-1zM307 517h1v1h-1zM316 517h1v1h-1zM326 517h1v1h-1zM335 517h1v1h-1zM345 517h1v1h-1zM354 517h1v1h-1zM364 517h1v1h-1zM373 517h1v1h-1zM382 517h1v1h-1zM392 517h1v1h-1zM401 517h1v1h-1zM411 517h1v1h-1zM420 517h1v1h-1zM430 517h1v1h-1zM439 517h1v1h-1zM449 517h1v1h-1zM458 517h1v1h-1zM467 517h1v1h-1zM477 517h1v1h-1zM486 517h1v1h-1zM496 517h1v1h-1zM505 517h1v1h-1zM515 517h1v1h-1zM524 517h1v1h-1zM534 517h1v1h-1zM543 517h1v1h-1zM553 517h1v1h-1zM562 517h1v1h-1zM571 517h1v1h-1zM581 517h1v1h-1zM590 517h1v1h-1zM600 517h1v1h-1zM609 517h1v1h-1zM619 517h1v1h-1zM628 517h1v1h-1zM184 527h1v1h-1zM193 527h1v1h-1zM203 527h1v1h-1zM212 527h1v1h-1zM222 527h1v1h-1zM231 527h1v1h-1zM241 527h1v1h-1zM250 527h1v1h-1zM260 527h1v1h-1zM269 527h1v1h-1zM278 527h1v1h-1zM288 527h1v1h-1zM297 527h1v1h-1zM307 527h1v1h-1zM316 527h1v1h-1zM326 527h1v1h-1zM335 527h1v1h-1zM345 527h1v1h-1zM354 527h1v1h-1zM364 527h1v1h-1zM373 527h1v1h-1zM382 527h1v1h-1zM392 527h1v1h-1zM401 527h1v1h-1zM411 527h1v1h-1zM420 527h1v1h-1zM430 527h1v1h-1zM439 527h1v1h-1zM449 527h1v1h-1zM458 527h1v1h-1zM467 527h1v1h-1zM477 527h1v1h-1zM486 527h1v1h-1zM496 527h1v1h-1zM505 527h1v1h-1zM515 527h1v1h-1zM524 527h1v1h-1zM534 527h1v1h-1zM543 527h1v1h-1zM553 527h1v1h-1zM562 527h1v1h-1zM571 527h1v1h-1zM581 527h1v1h-1zM590 527h1v1h-1zM600 527h1v1h-1zM609 527h1v1h-1zM619 527h1v1h-1zM628 527h1v1h-1zM184 536h1v1h-1zM193 536h1v1h-1zM203 536h1v1h-1zM212 536h1v1h-1zM222 536h1v1h-1zM231 536h1v1h-1zM241 536h1v1h-1zM250 536h1v1h-1zM260 536h1v1h-1zM269 536h1v1h-1zM278 536h1v1h-1zM288 536h1v1h-1zM297 536h1v1h-1zM307 536h1v1h-1zM316 536h1v1h-1zM326 536h1v1h-1zM335 536h1v1h-1zM345 536h1v1h-1zM354 536h1v1h-1zM364 536h1v1h-1zM373 536h1v1h-1zM382 536h1v1h-1zM392 536h1v1h-1zM401 536h1v1h-1zM411 536h1v1h-1zM420 536h1v1h-1zM430 536h1v1h-1zM439 536h1v1h-1zM449 536h1v1h-1zM458 536h1v1h-1zM467 536h1v1h-1zM477 536h1v1h-1zM486 536h1v1h-1zM496 536h1v1h-1zM505 536h1v1h-1zM515 536h1v1h-1zM524 536h1v1h-1zM534 536h1v1h-1zM543 536h1v1h-1zM553 536h1v1h-1zM562 536h1v1h-1zM571 536h1v1h-1zM581 536h1v1h-1zM590 536h1v1h-1zM600 536h1v1h-1zM609 536h1v1h-1zM619 536h1v1h-1zM628 536h1v1h-1zM184 545h1v1h-1zM193 545h1v1h-1zM203 545h1v1h-1zM212 545h1v1h-1zM222 545h1v1h-1zM231 545h1v1h-1zM241 545h1v1h-1zM250 545h1v1h-1zM260 545h1v1h-1zM269 545h1v1h-1zM278 545h1v1h-1zM288 545h1v1h-1zM297 545h1v1h-1zM307 545h1v1h-1zM316 545h1v1h-1zM326 545h1v1h-1zM335 545h1v1h-1zM345 545h1v1h-1zM354 545h1v1h-1zM364 545h1v1h-1zM373 545h1v1h-1zM382 545h1v1h-1zM392 545h1v1h-1zM401 545h1v1h-1zM411 545h1v1h-1zM420 545h1v1h-1zM430 545h1v1h-1zM439 545h1v1h-1zM449 545h1v1h-1zM458 545h1v1h-1zM467 545h1v1h-1zM477 545h1v1h-1zM486 545h1v1h-1zM496 545h1v1h-1zM505 545h1v1h-1zM515 545h1v1h-1zM524 545h1v1h-1zM534 545h1v1h-1zM543 545h1v1h-1zM553 545h1v1h-1zM562 545h1v1h-1zM571 545h1v1h-1zM581 545h1v1h-1zM590 545h1v1h-1zM600 545h1v1h-1zM609 545h1v1h-1zM619 545h1v1h-1zM628 545h1v1h-1zM184 555h1v1h-1zM193 555h1v1h-1zM203 555h1v1h-1zM212 555h1v1h-1zM222 555h1v1h-1zM231 555h1v1h-1zM241 555h1v1h-1zM250 555h1v1h-1zM260 555h1v1h-1zM269 555h1v1h-1zM278 555h1v1h-1zM288 555h1v1h-1zM297 555h1v1h-1zM307 555h1v1h-1zM316 555h1v1h-1zM326 555h1v1h-1zM335 555h1v1h-1zM345 555h1v1h-1zM354 555h1v1h-1zM364 555h1v1h-1zM373 555h1v1h-1zM382 555h1v1h-1zM392 555h1v1h-1zM401 555h1v1h-1zM411 555h1v1h-1zM420 555h1v1h-1zM430 555h1v1h-1zM439 555h1v1h-1zM449 555h1v1h-1zM458 555h1v1h-1zM467 555h1v1h-1zM477 555h1v1h-1zM486 555h1v1h-1zM496 555h1v1h-1zM505 555h1v1h-1zM515 555h1v1h-1zM524 555h1v1h-1zM534 555h1v1h-1zM543 555h1v1h-1zM553 555h1v1h-1zM562 555h1v1h-1zM571 555h1v1h-1zM581 555h1v1h-1zM590 555h1v1h-1zM600 555h1v1h-1zM609 555h1v1h-1zM619 555h1v1h-1zM628 555h1v1h-1zM184 565h1v1h-1zM193 565h1v1h-1zM203 565h1v1h-1zM212 565h1v1h-1zM222 565h1v1h-1zM231 565h1v1h-1zM241 565h1v1h-1zM250 565h1v1h-1zM260 565h1v1h-1zM269 565h1v1h-1zM278 565h1v1h-1zM288 565h1v1h-1zM297 565h1v1h-1zM307 565h1v1h-1zM316 565h1v1h-1zM326 565h1v1h-1zM335 565h1v1h-1zM345 565h1v1h-1zM354 565h1v1h-1zM364 565h1v1h-1zM373 565h1v1h-1zM382 565h1v1h-1zM392 565h1v1h-1zM401 565h1v1h-1zM411 565h1v1h-1zM420 565h1v1h-1zM430 565h1v1h-1zM439 565h1v1h-1zM449 565h1v1h-1zM458 565h1v1h-1zM467 565h1v1h-1zM477 565h1v1h-1zM486 565h1v1h-1zM496 565h1v1h-1zM505 565h1v1h-1zM515 565h1v1h-1zM524 565h1v1h-1zM534 565h1v1h-1zM543 565h1v1h-1zM553 565h1v1h-1zM562 565h1v1h-1zM571 565h1v1h-1zM581 565h1v1h-1zM590 565h1v1h-1zM600 565h1v1h-1zM609 565h1v1h-1zM619 565h1v1h-1zM628 565h1v1h-1zM184 574h1v1h-1zM193 574h1v1h-1zM203 574h1v1h-1zM212 574h1v1h-1zM222 574h1v1h-1zM231 574h1v1h-1zM241 574h1v1h-1zM250 574h1v1h-1zM260 574h1v1h-1zM269 574h1v1h-1zM278 574h1v1h-1zM288 574h1v1h-1zM297 574h1v1h-1zM307 574h1v1h-1zM316 574h1v1h-1zM326 574h1v1h-1zM335 574h1v1h-1zM345 574h1v1h-1zM354 574h1v1h-1zM364 574h1v1h-1zM373 574h1v1h-1zM382 574h1v1h-1zM392 574h1v1h-1zM401 574h1v1h-1zM411 574h1v1h-1zM420 574h1v1h-1zM430 574h1v1h-1zM439 574h1v1h-1zM449 574h1v1h-1zM458 574h1v1h-1zM467 574h1v1h-1zM477 574h1v1h-1zM486 574h1v1h-1zM496 574h1v1h-1zM505 574h1v1h-1zM515 574h1v1h-1zM524 574h1v1h-1zM534 574h1v1h-1zM543 574h1v1h-1zM553 574h1v1h-1zM562 574h1v1h-1zM571 574h1v1h-1zM581 574h1v1h-1zM590 574h1v1h-1zM600 574h1v1h-1zM609 574h1v1h-1zM619 574h1v1h-1zM628 574h1v1h-1zM184 584h1v1h-1zM193 584h1v1h-1zM203 584h1v1h-1zM212 584h1v1h-1zM222 584h1v1h-1zM231 584h1v1h-1zM241 584h1v1h-1zM250 584h1v1h-1zM260 584h1v1h-1zM269 584h1v1h-1zM278 584h1v1h-1zM288 584h1v1h-1zM297 584h1v1h-1zM307 584h1v1h-1zM316 584h1v1h-1zM326 584h1v1h-1zM335 584h1v1h-1zM345 584h1v1h-1zM354 584h1v1h-1zM364 584h1v1h-1zM373 584h1v1h-1zM382 584h1v1h-1zM392 584h1v1h-1zM401 584h1v1h-1zM411 584h1v1h-1zM420 584h1v1h-1zM430 584h1v1h-1zM439 584h1v1h-1zM449 584h1v1h-1zM458 584h1v1h-1zM467 584h1v1h-1zM477 584h1v1h-1zM486 584h1v1h-1zM496 584h1v1h-1zM505 584h1v1h-1zM515 584h1v1h-1zM524 584h1v1h-1zM534 584h1v1h-1zM543 584h1v1h-1zM553 584h1v1h-1zM562 584h1v1h-1zM571 584h1v1h-1zM581 584h1v1h-1zM590 584h1v1h-1zM600 584h1v1h-1zM609 584h1v1h-1zM619 584h1v1h-1zM628 584h1v1h-1zM184 593h1v1h-1zM193 593h1v1h-1zM203 593h1v1h-1zM212 593h1v1h-1zM222 593h1v1h-1zM231 593h1v1h-1zM241 593h1v1h-1zM250 593h1v1h-1zM260 593h1v1h-1zM269 593h1v1h-1zM278 593h1v1h-1zM288 593h1v1h-1zM297 593h1v1h-1zM307 593h1v1h-1zM316 593h1v1h-1zM326 593h1v1h-1zM335 593h1v1h-1zM345 593h1v1h-1zM354 593h1v1h-1zM364 593h1v1h-1zM373 593h1v1h-1zM382 593h1v1h-1zM392 593h1v1h-1zM401 593h1v1h-1zM411 593h1v1h-1zM420 593h1v1h-1zM430 593h1v1h-1zM439 593h1v1h-1zM449 593h1v1h-1zM458 593h1v1h-1zM467 593h1v1h-1zM477 593h1v1h-1zM486 593h1v1h-1zM496 593h1v1h-1zM505 593h1v1h-1zM515 593h1v1h-1zM524 593h1v1h-1zM534 593h1v1h-1zM543 593h1v1h-1zM553 593h1v1h-1zM562 593h1v1h-1zM571 593h1v1h-1zM581 593h1v1h-1zM590 593h1v1h-1zM600 593h1v1h-1zM609 593h1v1h-1zM619 593h1v1h-1zM628 593h1v1h-1zM184 603h1v1h-1zM193 603h1v1h-1zM203 603h1v1h-1zM212 603h1v1h-1zM222 603h1v1h-1zM231 603h1v1h-1zM241 603h1v1h-1zM250 603h1v1h-1zM260 603h1v1h-1zM269 603h1v1h-1zM278 603h1v1h-1zM288 603h1v1h-1zM297 603h1v1h-1zM307 603h1v1h-1zM316 603h1v1h-1zM326 603h1v1h-1zM335 603h1v1h-1zM345 603h1v1h-1zM354 603h1v1h-1zM364 603h1v1h-1zM373 603h1v1h-1zM382 603h1v1h-1zM392 603h1v1h-1zM401 603h1v1h-1zM411 603h1v1h-1zM420 603h1v1h-1zM430 603h1v1h-1zM439 603h1v1h-1zM449 603h1v1h-1zM458 603h1v1h-1zM467 603h1v1h-1zM477 603h1v1h-1zM486 603h1v1h-1zM496 603h1v1h-1zM505 603h1v1h-1zM515 603h1v1h-1zM524 603h1v1h-1zM534 603h1v1h-1zM543 603h1v1h-1zM553 603h1v1h-1zM562 603h1v1h-1zM571 603h1v1h-1zM581 603h1v1h-1zM590 603h1v1h-1zM600 603h1v1h-1zM609 603h1v1h-1zM619 603h1v1h-1zM628 603h1v1h-1zM184 612h1v1h-1zM193 612h1v1h-1zM203 612h1v1h-1zM212 612h1v1h-1zM222 612h1v1h-1zM231 612h1v1h-1zM241 612h1v1h-1zM250 612h1v1h-1zM260 612h1v1h-1zM269 612h1v1h-1zM278 612h1v1h-1zM288 612h1v1h-1zM297 612h1v1h-1zM307 612h1v1h-1zM316 612h1v1h-1zM326 612h1v1h-1zM335 612h1v1h-1zM345 612h1v1h-1zM354 612h1v1h-1zM364 612h1v1h-1zM373 612h1v1h-1zM382 612h1v1h-1zM392 612h1v1h-1zM401 612h1v1h-1zM411 612h1v1h-1zM420 612h1v1h-1zM430 612h1v1h-1zM439 612h1v1h-1zM449 612h1v1h-1zM458 612h1v1h-1zM467 612h1v1h-1zM477 612h1v1h-1zM486 612h1v1h-1zM496 612h1v1h-1zM505 612h1v1h-1zM515 612h1v1h-1zM524 612h1v1h-1zM534 612h1v1h-1zM543 612h1v1h-1zM553 612h1v1h-1zM562 612h1v1h-1zM571 612h1v1h-1zM581 612h1v1h-1zM590 612h1v1h-1zM600 612h1v1h-1zM609 612h1v1h-1zM619 612h1v1h-1zM628 612h1v1h-1zM184 622h1v1h-1zM193 622h1v1h-1zM203 622h1v1h-1zM212 622h1v1h-1zM222 622h1v1h-1zM231 622h1v1h-1zM241 622h1v1h-1zM250 622h1v1h-1zM260 622h1v1h-1zM269 622h1v1h-1zM278 622h1v1h-1zM288 622h1v1h-1zM297 622h1v1h-1zM307 622h1v1h-1zM316 622h1v1h-1zM326 622h1v1h-1zM335 622h1v1h-1zM345 622h1v1h-1zM354 622h1v1h-1zM364 622h1v1h-1zM373 622h1v1h-1zM382 622h1v1h-1zM392 622h1v1h-1zM401 622h1v1h-1zM411 622h1v1h-1zM420 622h1v1h-1zM430 622h1v1h-1zM439 622h1v1h-1zM449 622h1v1h-1zM458 622h1v1h-1zM467 622h1v1h-1zM477 622h1v1h-1zM486 622h1v1h-1zM496 622h1v1h-1zM505 622h1v1h-1zM515 622h1v1h-1zM524 622h1v1h-1zM534 622h1v1h-1zM543 622h1v1h-1zM553 622h1v1h-1zM562 622h1v1h-1zM571 622h1v1h-1zM581 622h1v1h-1zM590 622h1v1h-1zM600 622h1v1h-1zM609 622h1v1h-1zM619 622h1v1h-1zM628 622h1v1h-1zM184 631h1v1h-1zM193 631h1v1h-1zM203 631h1v1h-1zM212 631h1v1h-1zM222 631h1v1h-1zM231 631h1v1h-1zM241 631h1v1h-1zM250 631h1v1h-1zM260 631h1v1h-1zM269 631h1v1h-1zM278 631h1v1h-1zM288 631h1v1h-1zM297 631h1v1h-1zM307 631h1v1h-1zM316 631h1v1h-1zM326 631h1v1h-1zM335 631h1v1h-1zM345 631h1v1h-1zM354 631h1v1h-1zM364 631h1v1h-1zM373 631h1v1h-1zM382 631h1v1h-1zM392 631h1v1h-1zM401 631h1v1h-1zM411 631h1v1h-1zM420 631h1v1h-1zM430 631h1v1h-1zM439 631h1v1h-1zM449 631h1v1h-1zM458 631h1v1h-1zM467 631h1v1h-1zM477 631h1v1h-1zM486 631h1v1h-1zM496 631h1v1h-1zM505 631h1v1h-1zM515 631h1v1h-1zM524 631h1v1h-1zM534 631h1v1h-1zM543 631h1v1h-1zM553 631h1v1h-1zM562 631h1v1h-1zM571 631h1v1h-1zM581 631h1v1h-1zM590 631h1v1h-1zM600 631h1v1h-1zM609 631h1v1h-1zM619 631h1v1h-1zM628 631h1v1h-1zM184 641h1v1h-1zM193 641h1v1h-1zM203 641h1v1h-1zM212 641h1v1h-1zM222 641h1v1h-1zM231 641h1v1h-1zM241 641h1v1h-1zM250 641h1v1h-1zM260 641h1v1h-1zM269 641h1v1h-1zM278 641h1v1h-1zM288 641h1v1h-1zM297 641h1v1h-1zM307 641h1v1h-1zM316 641h1v1h-1zM326 641h1v1h-1zM335 641h1v1h-1zM345 641h1v1h-1zM354 641h1v1h-1zM364 641h1v1h-1zM373 641h1v1h-1zM382 641h1v1h-1zM392 641h1v1h-1zM401 641h1v1h-1zM411 641h1v1h-1zM420 641h1v1h-1zM430 641h1v1h-1zM439 641h1v1h-1zM449 641h1v1h-1zM458 641h1v1h-1zM467 641h1v1h-1zM477 641h1v1h-1zM486 641h1v1h-1zM496 641h1v1h-1zM505 641h1v1h-1zM515 641h1v1h-1zM524 641h1v1h-1zM534 641h1v1h-1zM543 641h1v1h-1zM553 641h1v1h-1zM562 641h1v1h-1zM571 641h1v1h-1zM581 641h1v1h-1zM590 641h1v1h-1zM600 641h1v1h-1zM609 641h1v1h-1zM619 641h1v1h-1zM628 641h1v1h-1zM184 650h1v1h-1zM193 650h1v1h-1zM203 650h1v1h-1zM212 650h1v1h-1zM222 650h1v1h-1zM231 650h1v1h-1zM241 650h1v1h-1zM250 650h1v1h-1zM260 650h1v1h-1zM269 650h1v1h-1zM278 650h1v1h-1zM288 650h1v1h-1zM297 650h1v1h-1zM307 650h1v1h-1zM316 650h1v1h-1zM326 650h1v1h-1zM335 650h1v1h-1zM345 650h1v1h-1zM354 650h1v1h-1zM364 650h1v1h-1zM373 650h1v1h-1zM382 650h1v1h-1zM392 650h1v1h-1zM401 650h1v1h-1zM411 650h1v1h-1zM420 650h1v1h-1zM430 650h1v1h-1zM439 650h1v1h-1zM449 650h1v1h-1zM458 650h1v1h-1zM467 650h1v1h-1zM477 650h1v1h-1zM486 650h1v1h-1zM496 650h1v1h-1zM505 650h1v1h-1zM515 650h1v1h-1zM524 650h1v1h-1zM534 650h1v1h-1zM543 650h1v1h-1zM553 650h1v1h-1zM562 650h1v1h-1zM571 650h1v1h-1zM581 650h1v1h-1zM590 650h1v1h-1zM600 650h1v1h-1zM609 650h1v1h-1zM619 650h1v1h-1zM628 650h1v1h-1z" fill="#a8a8a8"/></svg>
<div class="a" style="left:184px;top:312px;width:451px;height:3px;background:repeating-conic-gradient(#b4b4b4 0 25%,#fff 0 50%) 0 0/2px 2px"></div>
<div class="a" style="left:184px;top:448px;width:451px;height:3px;background:repeating-conic-gradient(#b4b4b4 0 25%,#fff 0 50%) 0 0/2px 2px"></div>
<div class="a" style="left:184px;top:561px;width:451px;height:3px;background:repeating-conic-gradient(#b4b4b4 0 25%,#fff 0 50%) 0 0/2px 2px"></div>
<div class="a" style="left:278px;top:343px;width:275px;height:60px;border:1px solid #d0d0d0"></div>
<div class="a" style="left:279px;top:363px;width:273px;height:1px;background:#d4d4d4"></div>
<div class="a" style="left:279px;top:382px;width:273px;height:1px;background:#d4d4d4"></div>
<div class="a" style="left:412px;top:344px;width:1px;height:59px;background:#d4d4d4"></div>
<div class="a" style="left:503px;top:344px;width:1px;height:59px;background:#d4d4d4"></div>
<div class="t" style="left:285px;width:120px;text-align:center;top:346px;font-size:13px;color:#111;line-height:15px">ФИО</div>
<div class="t" style="left:397px;width:120px;text-align:center;top:346px;font-size:13px;color:#111;line-height:15px">[ФИО]</div>
<div class="t" style="left:467px;width:120px;text-align:center;top:346px;font-size:13px;color:#111;line-height:15px">Всего</div>
<div class="t" style="left:285px;width:120px;text-align:center;top:365px;font-size:13px;color:#111;line-height:15px">[Месяц]</div>
<div class="t" style="left:397px;width:120px;text-align:center;top:365px;font-size:13px;color:#111;line-height:15px">[Количество]</div>
<div class="t" style="left:285px;width:120px;text-align:center;top:385px;font-size:13px;color:#111;line-height:15px">Всего</div>
<div class="a" style="left:276px;top:341px;width:5px;height:5px;border:1px solid #111;background:#fff"></div>
<div class="a" style="left:413px;top:341px;width:5px;height:5px;border:1px solid #111;background:#fff"></div>
<div class="a" style="left:550px;top:341px;width:5px;height:5px;border:1px solid #111;background:#fff"></div>
<div class="a" style="left:276px;top:370px;width:5px;height:5px;border:1px solid #111;background:#fff"></div>
<div class="a" style="left:550px;top:370px;width:5px;height:5px;border:1px solid #111;background:#fff"></div>
<div class="a" style="left:276px;top:401px;width:5px;height:5px;border:1px solid #111;background:#fff"></div>
<div class="a" style="left:413px;top:401px;width:5px;height:5px;border:1px solid #111;background:#fff"></div>
<div class="a" style="left:550px;top:401px;width:5px;height:5px;border:1px solid #111;background:#fff"></div>
<svg class="a" style="left:286px;top:335px" width="15" height="15" viewBox="0 0 15 15">
<rect x="0.5" y="0.5" width="14" height="14" fill="#c8d8ee" stroke="#6a84b0"/>
<path d="M7.5 2v11M2 7.5h11" stroke="#111" stroke-width="1"/><path d="M7.5 1.5l-2 2.5h4zM7.5 13.5l-2-2.5h4zM1.5 7.5l2.5-2v4zM13.5 7.5l-2.5-2v4z" fill="#111"/>
</svg>
<div class="a" style="left:635px;top:273px;width:15px;height:377px;background:linear-gradient(90deg,#9db6d8,#8ba6cb 60%,#7f9bc2)"></div>
<div class="a" style="left:638px;top:279px;width:0;height:0;border-left:5px solid transparent;border-right:5px solid transparent;border-bottom:5px solid #4a5670"></div>
<div class="a" style="left:636px;top:291px;width:13px;height:249px;border:1px solid #5d7097;border-radius:2px;background:linear-gradient(90deg,#e6ebf1,#dfe5ec 45%,#c3cdda 55%,#c9d3df)"></div>
<div class="a" style="left:639px;top:412px;width:7px;height:1px;background:#8a96a8;box-shadow:0 2px 0 #8a96a8,0 4px 0 #8a96a8"></div>
<div class="a" style="left:638px;top:639px;width:0;height:0;border-left:5px solid transparent;border-right:5px solid transparent;border-top:5px solid #4a5670"></div>
<div class="a" style="left:184px;top:650px;width:451px;height:15px;background:linear-gradient(#9db6d8,#8ba6cb 60%,#7f9bc2)"></div>
<div class="a" style="left:635px;top:650px;width:15px;height:15px;background:#a6c2e8"></div>
<div class="a" style="left:190px;top:654px;width:0;height:0;border-top:4px solid transparent;border-bottom:4px solid transparent;border-right:5px solid #4a5670"></div>
<div class="a" style="left:623px;top:654px;width:0;height:0;border-top:4px solid transparent;border-bottom:4px solid transparent;border-left:5px solid #4a5670"></div>
<div class="a" style="left:203px;top:651px;width:262px;height:13px;border:1px solid #5d7097;border-radius:2px;background:linear-gradient(#e6ebf1,#dfe5ec 45%,#c3cdda 55%,#c9d3df)"></div>
<div class="a" style="left:331px;top:654px;width:1px;height:7px;background:#8a96a8;box-shadow:2px 0 0 #8a96a8,4px 0 0 #8a96a8"></div>
<div class="a" style="left:35px;top:665px;width:615px;height:27px;background:linear-gradient(#c4dcfb,#cfe3fb 50%,#bcd8fb)"></div>
<svg class="a" style="left:41px;top:665px" width="58" height="24" viewBox="0 0 58 24"><path d="M0.5 0V18.5L4.5 22.5H53.5L55.5 20.5V0" fill="#d3e5fb" stroke="#a3b9d6"/><path d="M1.5 0V18L5 21.5H53L54.5 20V0" fill="none" stroke="#eef5fd"/></svg>
<svg class="a" style="left:97px;top:665px" width="62" height="24" viewBox="0 0 62 24"><path d="M0.5 0V18.5L4.5 22.5H57.5L59.5 20.5V0" fill="#f4f8fd" stroke="#a3b9d6"/></svg>
<svg class="a" style="left:45px;top:669px" width="15" height="14" viewBox="0 0 15 14">
<rect x="0.5" y="0.5" width="14" height="13" fill="#fff" stroke="#333"/><rect x="1" y="1" width="2.5" height="12" fill="#cfc6a8"/>
<path d="M4 3.5h3M5 5.5h3M4 10h4" stroke="#1030e0" stroke-width="1.2"/><path d="M8.5 3.5h4M9.5 5.5h2M7 7.5h5" stroke="#aaa" stroke-width="0.8"/>
</svg>
<div class="t" style="left:64px;top:669px;color:#1c3c88;font-size:11.5px">Code</div>
<div class="a" style="left:101px;top:668px;width:14px;height:15px;border:1px solid #6a7688;background:linear-gradient(135deg,#fff,#d0d6e0)"></div>
<div class="t" style="left:120px;top:669px;color:#1c3c88;font-size:11.5px">Page1</div>
<div class="a" style="left:650px;top:249px;width:3px;height:442px;background:#b9d6fb"></div>
<div class="a" style="left:900px;top:171px;width:1px;height:522px;background:#dcd6ca"></div>
<div class="a" style="left:901px;top:145px;width:4px;height:548px;background:#bccadc"></div>
<div class="a" style="left:905px;top:0px;width:2px;height:721px;background:#8a9ab0"></div>
<div class="a" style="left:653px;top:249px;width:247px;height:20px;background:linear-gradient(#e3eefc,#d3e4fb 50%,#c2dafb)"></div>
<div class="t" style="left:658px;top:253px;color:#1c3a80;font-size:11.5px">Data</div>
<svg class="a" style="left:869px;top:254px" width="9" height="9" viewBox="0 0 9 9"><path d="M2 0.5h5M2.5 0.5v4M6.5 0.5v4M0.5 4.5h8M4.5 4.5v4.5" stroke="#10286a" stroke-width="1.2" fill="none"/><rect x="2.5" y="0.5" width="2" height="4" fill="#10286a"/></svg>
<svg class="a" style="left:886px;top:254px" width="10" height="9"><path d="M1 0.5L9 8.5M9 0.5L1 8.5" stroke="#10286a" stroke-width="1.8"/></svg>
<div class="a" style="left:653px;top:269px;width:247px;height:24px;background:linear-gradient(#e1edfd,#d5e5fb 50%,#c3dbfb);border-bottom:1px solid #8db2e6"></div>
<div class="t" style="left:659px;top:275px;color:#1c3a80;font-size:11.5px">Actions</div>
<div class="a" style="left:705px;top:280px;width:0;height:0;border-left:3px solid transparent;border-right:3px solid transparent;border-top:3px solid #1c3f84"></div>
<svg class="a" style="left:719px;top:274px" width="16" height="15" viewBox="0 0 16 15"><rect x="0.5" y="3.5" width="10" height="10" fill="#f4f4f4" stroke="#b8b8b8"/><path d="M2.5 6h5M2.5 8h5M2.5 10h5" stroke="#c0c0c0"/><path d="M6 10L14 2" stroke="#c8c8c8" stroke-width="2.4"/></svg>
<svg class="a" style="left:744px;top:275px" width="14" height="13"><path d="M1 1L13 12M13 1L1 12" stroke="#a8a8a8" stroke-width="1.6"/></svg>
<svg class="a" style="left:767px;top:274px" width="16" height="15" viewBox="0 0 16 15"><rect x="0.5" y="0.5" width="13" height="11" fill="#f0f0f0" stroke="#bcbcbc"/><path d="M0.5 3.5h13M0.5 7h13M4.5 3.5v8M9 3.5v8" stroke="#c4c4c4"/><circle cx="12" cy="11" r="2.5" fill="#e8e8e8" stroke="#b0b0b0"/></svg>
<div class="a" style="left:653px;top:293px;width:247px;height:148px;background:#fff"></div>
<div class="a" style="left:664px;top:307px;width:1px;height:124px;background:repeating-linear-gradient(#8a8a8a 0 1px,transparent 1px 2px)"></div>
<div class="a" style="left:683px;top:307px;width:1px;height:11px;background:repeating-linear-gradient(#8a8a8a 0 1px,transparent 1px 2px)"></div>
<div class="a" style="left:702px;top:323px;width:1px;height:44px;background:repeating-linear-gradient(#8a8a8a 0 1px,transparent 1px 2px)"></div>
<div class="a" style="left:669px;top:302px;width:6px;height:1px;background:repeating-linear-gradient(90deg,#8a8a8a 0 1px,transparent 1px 2px)"></div>
<div class="a" style="left:688px;top:318px;width:6px;height:1px;background:repeating-linear-gradient(90deg,#8a8a8a 0 1px,transparent 1px 2px)"></div>
<div class="a" style="left:703px;top:334px;width:11px;height:1px;background:repeating-linear-gradient(90deg,#8a8a8a 0 1px,transparent 1px 2px)"></div>
<div class="a" style="left:703px;top:350px;width:11px;height:1px;background:repeating-linear-gradient(90deg,#8a8a8a 0 1px,transparent 1px 2px)"></div>
<div class="a" style="left:703px;top:366px;width:11px;height:1px;background:repeating-linear-gradient(90deg,#8a8a8a 0 1px,transparent 1px 2px)"></div>
<div class="a" style="left:669px;top:382px;width:6px;height:1px;background:repeating-linear-gradient(90deg,#8a8a8a 0 1px,transparent 1px 2px)"></div>
<div class="a" style="left:665px;top:398px;width:12px;height:1px;background:repeating-linear-gradient(90deg,#8a8a8a 0 1px,transparent 1px 2px)"></div>
<div class="a" style="left:665px;top:414px;width:12px;height:1px;background:repeating-linear-gradient(90deg,#8a8a8a 0 1px,transparent 1px 2px)"></div>
<div class="a" style="left:669px;top:430px;width:6px;height:1px;background:repeating-linear-gradient(90deg,#8a8a8a 0 1px,transparent 1px 2px)"></div>
<div class="a" style="left:660px;top:298px;width:9px;height:9px;border:1px solid #7a7a7a;background:#fff"></div><div class="a" style="left:662px;top:302px;width:5px;height:1px;background:#111"></div>
<div class="a" style="left:679px;top:314px;width:9px;height:9px;border:1px solid #7a7a7a;background:#fff"></div><div class="a" style="left:681px;top:318px;width:5px;height:1px;background:#111"></div>
<div class="a" style="left:660px;top:378px;width:9px;height:9px;border:1px solid #7a7a7a;background:#fff"></div><div class="a" style="left:662px;top:382px;width:5px;height:1px;background:#111"></div><div class="a" style="left:664px;top:380px;width:1px;height:5px;background:#111"></div>
<div class="a" style="left:660px;top:426px;width:9px;height:9px;border:1px solid #7a7a7a;background:#fff"></div><div class="a" style="left:662px;top:430px;width:5px;height:1px;background:#111"></div><div class="a" style="left:664px;top:428px;width:1px;height:5px;background:#111"></div>
<svg class="a" style="left:676px;top:295px" width="14" height="15" viewBox="0 0 14 15"><defs><linearGradient id="cy" x1="0" x2="1"><stop offset="0" stop-color="#e0a020"/><stop offset="0.45" stop-color="#ffe9a0"/><stop offset="1" stop-color="#d89818"/></linearGradient></defs>
<path d="M1 3V12A6 2.5 0 0 0 13 12V3" fill="url(#cy)" stroke="#c48a10" stroke-width="0.9"/><ellipse cx="7" cy="3" rx="6" ry="2.4" fill="#fff0b8" stroke="#c48a10" stroke-width="0.9"/></svg>
<svg class="a" style="left:695px;top:311px" width="15" height="14" viewBox="0 0 15 14"><rect x="0.5" y="0.5" width="14" height="13" fill="#fff" stroke="#7f8fa6"/><rect x="0.5" y="0.5" width="14" height="3" fill="#8eaad4"/><path d="M0.5 6.5h14M0.5 9.5h14M5 3.5v10M10 3.5v10" stroke="#a8b8cc"/></svg>
<div class="a" style="left:714px;top:327px;width:13px;height:13px;border:1px solid #7f8fa6;background:#f6f8fc"></div>
<div class="t" style="left:715px;top:328px;font-size:8px;color:#222;line-height:11px">12</div>
<div class="a" style="left:714px;top:343px;width:13px;height:13px;border:1px solid #7f8fa6;background:#f6f8fc"></div>
<div class="t" style="left:715px;top:344px;font-size:8px;color:#222;line-height:11px">12</div>
<div class="a" style="left:714px;top:359px;width:13px;height:13px;border:1px solid #7f8fa6;background:#f6f8fc"></div>
<div class="t" style="left:716px;top:359px;font-family:'Liberation Serif',serif;font-weight:bold;font-size:11px;color:#222;line-height:13px">A</div>
<div class="a" style="left:675px;top:376px;width:16px;height:11px;background:#6f9de0"></div>
<div class="t" style="left:676px;top:375px;font-size:10px;color:#e8f0fc;line-height:12px">var</div>
<div class="t" style="left:677px;top:390px;font-family:'Liberation Serif',serif;font-weight:bold;font-size:14px;color:#111;line-height:15px">&#931;</div>
<svg class="a" style="left:675px;top:406px" width="16" height="16" viewBox="0 0 16 16"><path d="M3.5 1H1.5V8H3.5" stroke="#2a5ab0" fill="none" stroke-width="1.4"/><path d="M9 1H11" stroke="#2a5ab0" stroke-width="1.4"/><path d="M6.5 4.5H4.8V14.5H6.5M12 4.5H13.8V14.5H12" stroke="#2a5ab0" fill="none" stroke-width="1.3"/></svg>
<div class="t" style="left:681px;top:409px;font-size:10px;font-weight:bold;color:#2a5ab0;line-height:11px">?</div>
<div class="t" style="left:676px;top:422px;font-family:'Liberation Serif',serif;font-style:italic;font-size:13px;color:#111;line-height:15px">f<span style="font-size:10px">x</span></div>
<div class="t" style="left:695px;top:296px;color:#111;font-size:11px">Data Sources</div>
<div class="t" style="left:714px;top:312px;color:#111;font-size:11px">Данные</div>
<div class="t" style="left:733px;top:328px;color:#111;font-size:11px">Месяц</div>
<div class="t" style="left:733px;top:344px;color:#111;font-size:11px">Количество</div>
<div class="t" style="left:733px;top:360px;color:#111;font-size:11px">ФИО</div>
<div class="t" style="left:695px;top:376px;color:#111;font-size:11px">System Variables</div>
<div class="t" style="left:695px;top:392px;color:#111;font-size:11px">Totals</div>
<div class="t" style="left:695px;top:408px;color:#111;font-size:11px">Parameters</div>
<div class="t" style="left:695px;top:424px;color:#111;font-size:11px">Functions</div>
<div class="a" style="left:653px;top:441px;width:247px;height:27px;background:linear-gradient(#b4d2fa,#c4dcfb 60%,#d3e5fb)"></div>
<div class="a" style="left:659px;top:441px;width:53px;height:23px;border:1px solid #a8bcd8;border-top:none;border-radius:0 0 4px 4px;background:linear-gradient(#f8fbfe,#e8eff9)"></div>
<div class="a" style="left:714px;top:441px;width:87px;height:22px;border:1px solid #9fb6d6;border-top:none;border-radius:0 0 4px 4px;background:linear-gradient(#c8ddf9,#d8e7fb)"></div>
<svg class="a" style="left:663px;top:444px" width="13" height="15" viewBox="0 0 13 15"><defs><linearGradient id="cy2" x1="0" x2="1"><stop offset="0" stop-color="#e0a020"/><stop offset="0.45" stop-color="#ffe9a0"/><stop offset="1" stop-color="#d89818"/></linearGradient></defs>
<path d="M1 3V12A5.5 2.3 0 0 0 12 12V3" fill="url(#cy2)" stroke="#c48a10" stroke-width="0.9"/><ellipse cx="6.5" cy="3" rx="5.5" ry="2.2" fill="#fff0b8" stroke="#c48a10" stroke-width="0.9"/></svg>
<div class="t" style="left:681px;top:446px;color:#1c3a80;font-size:11.5px">Data</div>
<svg class="a" style="left:720px;top:445px" width="12" height="15" viewBox="0 0 12 15"><rect x="0" y="0" width="3" height="3" fill="#4a7ad0"/><path d="M1.5 3V13H6M1.5 8H6" stroke="#555" fill="none"/><rect x="6" y="6" width="4" height="4" fill="#50b040"/><rect x="6" y="11" width="4" height="4" fill="#50b040"/></svg>
<div class="t" style="left:735px;top:446px;color:#1c3a80;font-size:11.5px">Report Tree</div>
<div class="a" style="left:653px;top:468px;width:247px;height:2px;background:#b9d6fb"></div>
<div class="a" style="left:653px;top:470px;width:247px;height:20px;background:linear-gradient(#e3eefc,#d3e4fb 50%,#c2dafb)"></div>
<div class="t" style="left:658px;top:473px;color:#1c3a80;font-size:11.5px">Properties</div>
<svg class="a" style="left:869px;top:474px" width="9" height="9" viewBox="0 0 9 9"><path d="M2 0.5h5M2.5 0.5v4M6.5 0.5v4M0.5 4.5h8M4.5 4.5v4.5" stroke="#10286a" stroke-width="1.2" fill="none"/><rect x="2.5" y="0.5" width="2" height="4" fill="#10286a"/></svg>
<svg class="a" style="left:886px;top:474px" width="10" height="9"><path d="M1 0.5L9 8.5M9 0.5L1 8.5" stroke="#10286a" stroke-width="1.8"/></svg>
<div class="a" style="left:653px;top:490px;width:247px;height:20px;background:#fff;border:1px solid #b9cfe9"></div>
<div class="t" style="left:658px;top:494px;color:#111;font-size:11px;font-weight:bold;letter-spacing:0.7px">Matrix1</div>
<div class="t" style="left:709px;top:494px;color:#111;font-size:11px">MatrixObject</div>
<div class="a" style="left:884px;top:491px;width:15px;height:18px;border:1px solid #7f9ec8;background:linear-gradient(#e8f1fd,#c6dbf6)"></div>
<div class="a" style="left:888px;top:499px;width:0;height:0;border-left:3px solid transparent;border-right:3px solid transparent;border-top:3px solid #1c3f84"></div>
<div class="a" style="left:653px;top:510px;width:247px;height:25px;background:linear-gradient(#deebfc,#cfe2fb 50%,#bfd8fa)"></div>
<svg class="a" style="left:658px;top:515px" width="17" height="15" viewBox="0 0 17 15"><rect x="0.5" y="0.5" width="5" height="5" fill="#fff" stroke="#555"/><rect x="2" y="2" width="2" height="2" fill="#111"/><rect x="0.5" y="8.5" width="5" height="5" fill="#fff" stroke="#555"/><rect x="2" y="10" width="2" height="2" fill="#111"/><path d="M7 1.5h4M12 1.5h4M7 4h9M9 6.5h7M7 9.5h4M12 9.5h4M7 12h9M9 14.5h7" stroke="#8a8a8a" stroke-dasharray="1 1"/></svg>
<div class="t" style="left:682px;top:511px;font-family:'Liberation Serif',serif;font-weight:bold;font-size:9px;line-height:9px;color:#3a5ab0">A</div>
<div class="t" style="left:682px;top:520px;font-family:'Liberation Serif',serif;font-weight:bold;font-size:10px;line-height:10px;color:#c03030">Z</div>
<svg class="a" style="left:691px;top:513px" width="7" height="17"><path d="M3.5 0V15M0.5 11.5L3.5 15.5 6.5 11.5" stroke="#111" stroke-width="1.2" fill="none"/></svg>
<div class="a" style="left:704px;top:513px;width:1px;height:18px;background:#a6c2e6;box-shadow:1px 0 0 #fff"></div>
<svg class="a" style="left:711px;top:515px" width="13" height="12" viewBox="0 0 13 12"><rect x="0.5" y="0.5" width="12" height="11" fill="#fff" stroke="#2f4a78"/><path d="M2.5 3h1M5 3h6M2.5 5.5h1M5 5.5h6M2.5 8h1M5 8h6" stroke="#2f4a78"/></svg>
<div class="a" style="left:729px;top:511px;width:24px;height:22px;border:1px solid #e8c070;border-radius:3px;background:linear-gradient(#fde0a8,#fbc063 50%,#fad080)"></div>
<svg class="a" style="left:735px;top:514px" width="12" height="16"><path d="M9 1L3 8H7L2 15" stroke="#d07020" stroke-width="1.3" fill="none"/><path d="M10 1.5L4 8.5" stroke="#fff3c0" stroke-width="0.8"/></svg>
<div class="a" style="left:653px;top:535px;width:247px;height:95px;background:#b9d6fb;border:1px solid #7a8aa0"></div>
<div class="a" style="left:668px;top:536px;width:216px;height:93px;background:#fff"></div>
<div class="a" style="left:668px;top:536px;width:76px;height:17px;background:#b9d6fb"></div>
<div class="a" style="left:668px;top:552px;width:216px;height:1px;background:#b3cdf0"></div>
<div class="a" style="left:668px;top:568px;width:216px;height:1px;background:#b3cdf0"></div>
<div class="a" style="left:668px;top:584px;width:216px;height:1px;background:#b3cdf0"></div>
<div class="a" style="left:668px;top:600px;width:216px;height:1px;background:#b3cdf0"></div>
<div class="a" style="left:668px;top:616px;width:216px;height:1px;background:#b3cdf0"></div>
<div class="a" style="left:744px;top:536px;width:1px;height:93px;background:#b3cdf0"></div>
<div class="t" style="left:671px;top:539px;color:#111;font-size:11.2px">AfterData</div>
<div class="t" style="left:671px;top:555px;color:#111;font-size:11.2px">AfterPrint</div>
<div class="t" style="left:671px;top:571px;color:#111;font-size:11.2px">BeforePrint</div>
<div class="t" style="left:671px;top:587px;color:#111;font-size:11.2px">Click</div>
<div class="t" style="left:671px;top:603px;color:#111;font-size:11.2px">ManualBuild</div>
<div class="t" style="left:671px;top:619px;color:#111;font-size:11.2px">ModifyResult</div>
<div class="t" style="left:747px;top:539px;color:#111;font-size:11px;font-weight:bold;letter-spacing:0.75px">Matrix1_AfterData</div>
<div class="a" style="left:884px;top:536px;width:15px;height:93px;background:repeating-conic-gradient(#d8d8d8 0 25%,#f4f4f4 0 50%) 0 0/2px 2px"></div>
<div class="a" style="left:884px;top:536px;width:15px;height:16px;background:#ece9e3;border:1px solid;border-color:#fff #555 #555 #fff"></div>
<div class="a" style="left:888px;top:542px;width:0;height:0;border-left:4px solid transparent;border-right:4px solid transparent;border-bottom:4px solid #111"></div>
<div class="a" style="left:884px;top:552px;width:15px;height:27px;background:#ece9e3;border:1px solid;border-color:#fff #555 #555 #fff"></div>
<div class="a" style="left:884px;top:613px;width:15px;height:16px;background:#ece9e3;border:1px solid;border-color:#fff #555 #555 #fff"></div>
<div class="a" style="left:888px;top:619px;width:0;height:0;border-left:4px solid transparent;border-right:4px solid transparent;border-top:4px solid #111"></div>
<div class="a" style="left:653px;top:630px;width:247px;height:3px;background:#b9d6fb"></div>
<div class="a" style="left:653px;top:633px;width:247px;height:59px;background:#b9d6fb;border:1px solid #7a8aa0"></div>
<div class="t" style="left:659px;top:637px;color:#111;font-size:11px;font-weight:bold;letter-spacing:0.7px">AfterData</div>
<div class="t" style="left:659px;top:652px;color:#111;font-size:11px;letter-spacing:0.1px">Gets or sets a script event name that will be</div>
<div class="t" style="left:659px;top:665px;color:#111;font-size:11px;letter-spacing:0.12px">fired after the object was filled with data.</div>
<div class="a" style="left:0;top:694px;width:907px;height:23px;background:linear-gradient(#dfe8f3,#ccd8e6 50%,#b8c7da)"></div>
<div class="a" style="left:0;top:717px;width:907px;height:2px;background:#8da3c1"></div>
<div class="a" style="left:0;top:719px;width:907px;height:2px;background:#b9c6d6"></div>
<div class="a" style="left:0;top:249px;width:1px;height:472px;background:#8a96a6"></div>
<div class="a" style="left:1px;top:249px;width:1px;height:470px;background:#e3eaf3"></div>
<svg class="a" style="left:893px;top:706px" width="11" height="11" viewBox="0 0 11 11"><g fill="#8a9ab0"><rect x="8" y="8" width="2" height="2"/><rect x="5" y="8" width="2" height="2"/><rect x="2" y="8" width="2" height="2"/><rect x="8" y="5" width="2" height="2"/><rect x="5" y="5" width="2" height="2"/><rect x="8" y="2" width="2" height="2"/></g></svg>
</body></html>
